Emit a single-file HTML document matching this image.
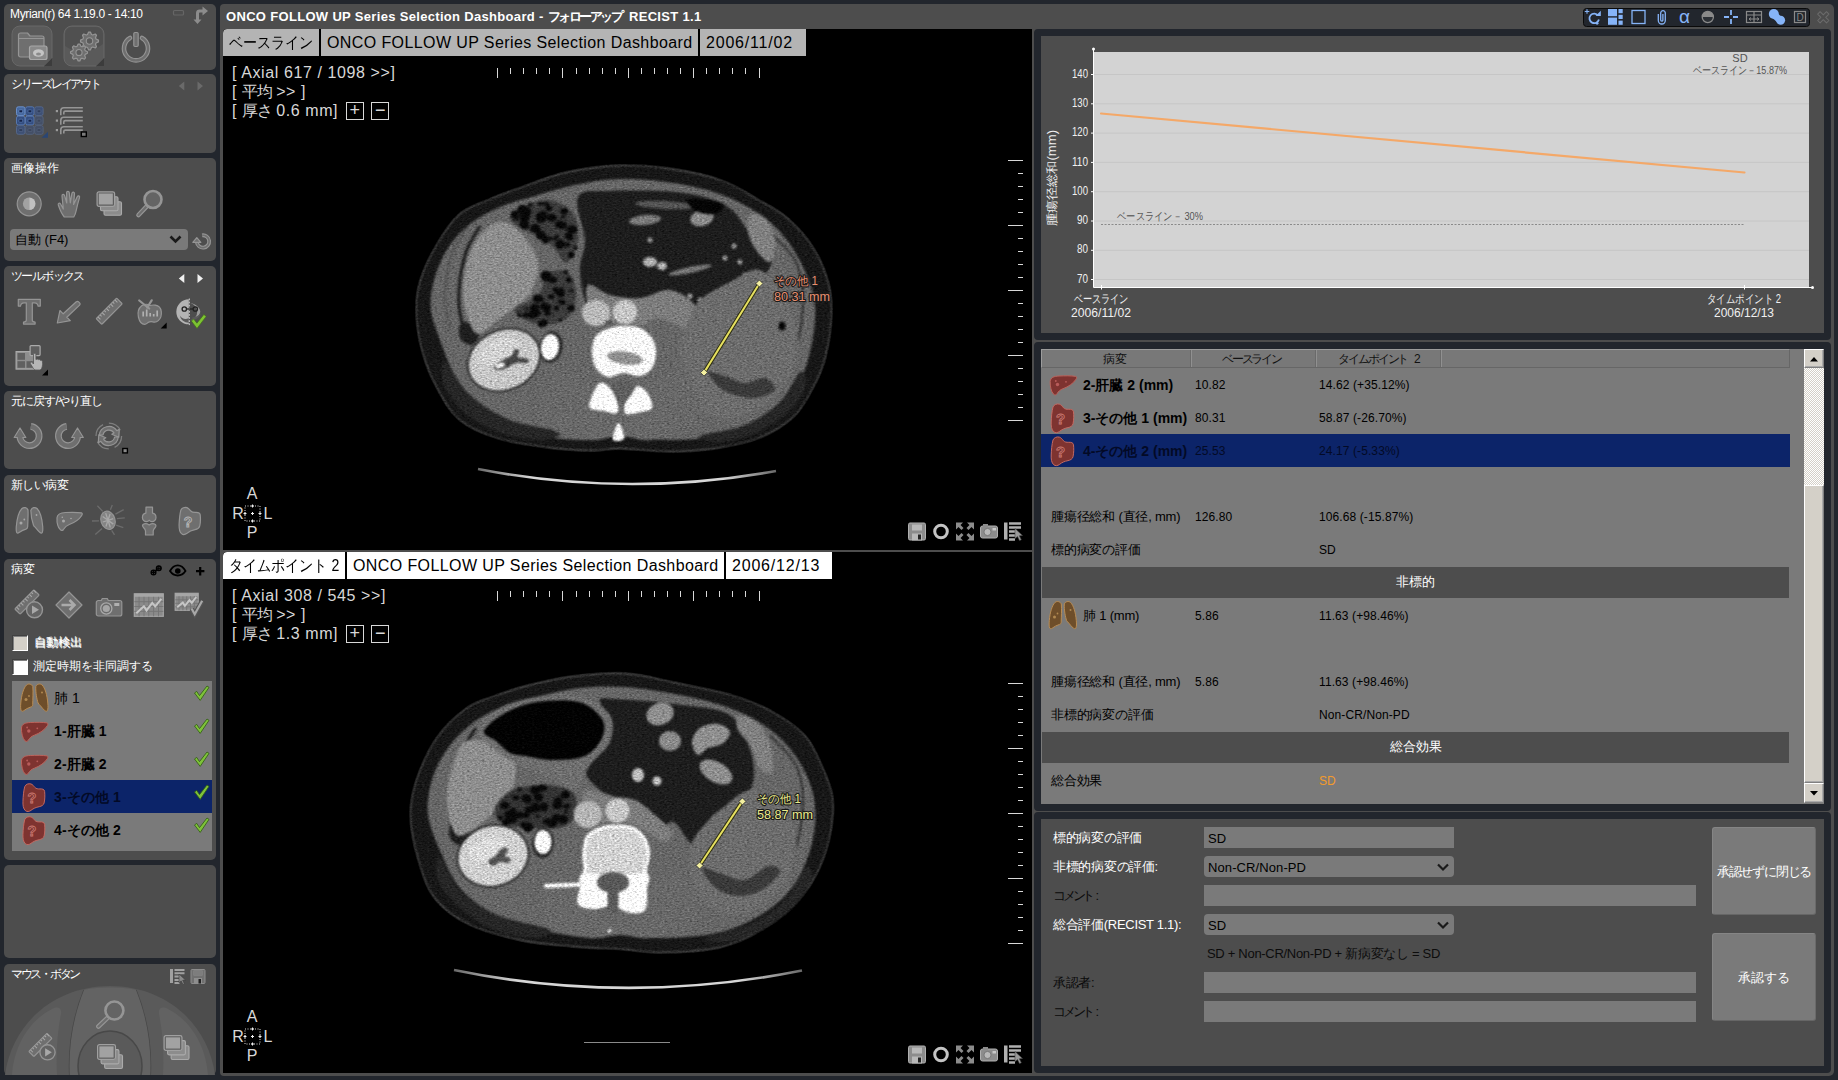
<!DOCTYPE html>
<html lang="ja">
<head>
<meta charset="utf-8">
<title>Myrian - ONCO FOLLOW UP</title>
<style>
*{box-sizing:border-box;margin:0;padding:0}
html,body{width:1838px;height:1080px;overflow:hidden;background:#22262d;font-family:"Liberation Sans",sans-serif;font-size:12px;line-height:14px;color:#fff}
.abs{position:absolute}
.p{position:absolute;left:4px;width:212px;background:#4d4d4d;border-radius:5px}
.pt{position:absolute;left:7px;top:3px;font-size:12px;line-height:14px;color:#fff;white-space:nowrap}
.t{position:absolute;white-space:nowrap;line-height:14px}
.j{letter-spacing:-1px}
svg{position:absolute;overflow:visible}
/* center */
#center{position:absolute;left:220px;top:4px;width:814px;height:1072px;background:#4d4d4d;border-radius:4px 0 0 4px}
.vp{position:absolute;left:3px;width:809px;background:#000;overflow:hidden;border-top-left-radius:4px}
.tab{position:absolute;top:0;height:27px;background:#b4b4b4;color:#000;font-size:16px;line-height:27px;white-space:nowrap;overflow:hidden;padding-left:6px;letter-spacing:0.4px}
.tab.on{background:#fff}
.tab i{font-style:normal;display:inline-block;transform-origin:0 50%;transform:scaleX(0.88);letter-spacing:0}
.bx{display:inline-block;width:18px;height:18px;border:1px solid #d8d8d8;line-height:15px;text-align:center;font-size:18px;vertical-align:0;letter-spacing:0;margin-left:2.5px}
.ov{position:absolute;color:#d8d8d8;font-size:16px;white-space:nowrap;line-height:19px;letter-spacing:0.6px}
.oj{letter-spacing:-1.5px}
/* right */
#right{position:absolute;left:1034px;top:4px;width:800px;height:1072px;background:#4d4d4d;border-radius:0 5px 5px 0}
.rp{position:absolute;left:0;width:797px;background:#4d4d4d;border:7px solid #22262d;border-radius:4px}
.th{color:#111;font-size:12px}
.td{color:#000;font-size:12px;letter-spacing:.1px}
.td .k{font-size:13px;letter-spacing:-.2px}
.td b{font-size:14px;letter-spacing:0}
.sbb{width:20px;background:#d4d0c8;border:1px solid #fff;border-right-color:#808080;border-bottom-color:#808080;box-shadow:inset -1px -1px 0 #aaa}
.fl{font-size:13px;color:#fff;letter-spacing:-.3px}
.fb{background:#7a7a7a;color:#000;font-size:13px;letter-spacing:.1px;line-height:23px;padding-left:4px;overflow:hidden;white-space:nowrap}
</style>
</head>
<body>
<!-- ============ SIDEBAR ============ -->
<div id="side">
<div class="p" style="top:4px;height:66px"></div>
<div class="p" style="top:74px;height:79px"></div>
<div class="p" style="top:158px;height:102.5px"></div>
<div class="p" style="top:266px;height:120px"></div>
<div class="p" style="top:391px;height:78px"></div>
<div class="p" style="top:475px;height:78px"></div>
<div class="p" style="top:559px;height:301px"></div>
<div class="p" style="top:865px;height:92.5px"></div>
<div class="p" style="top:963.5px;height:111.5px"></div>
<div class="pt" style="left:10px;top:6.5px;letter-spacing:-0.35px;font-size:12px">Myrian(r) 64 1.19.0 - 14:10</div>
<div class="pt" style="left:11px;top:76.5px;letter-spacing:-2.100px;">シリーズレイアウト</div>
<div class="pt" style="left:11px;top:160.5px;letter-spacing:0;">画像操作</div>
<div class="pt" style="left:11px;top:268.5px;letter-spacing:-1.600px;">ツールボックス</div>
<div class="pt" style="left:11px;top:393.5px;letter-spacing:-.9px;">元に戻す/やり直し</div>
<div class="pt" style="left:11px;top:478px;letter-spacing:-.6px;">新しい病変</div>
<div class="pt" style="left:11px;top:562px;letter-spacing:0;">病変</div>
<div class="pt" style="left:11px;top:966.5px;letter-spacing:-2.300px;">マウス・ボタン</div>
<div class="abs" style="left:10px;top:229px;width:178px;height:21px;background:#7a7a7a;border-radius:4px;color:#000;font-size:13px;line-height:21px;padding-left:5px;white-space:nowrap">自動 (F4)</div>
<div class="abs" style="left:12px;top:635px;width:16px;height:16px;background:#d4d0c8;border:1px solid #404040;border-right-color:#fff;border-bottom-color:#fff;box-shadow:inset 1px 1px 0 #808080"></div>
<div class="abs" style="left:12px;top:659px;width:16px;height:16px;background:#fff;border:1px solid #404040;border-right-color:#fff;border-bottom-color:#fff;box-shadow:inset 1px 1px 0 #808080"></div>
<div class="pt" style="left:34px;top:635px;font-size:12px;text-shadow:1px 1px 0 #fff;letter-spacing:0">自動検出</div>
<div class="pt" style="left:33px;top:659px;font-size:12px;letter-spacing:0">測定時期を非同調する</div>
<div class="abs" style="left:12px;top:681px;width:200px;height:170px;background:#7a7a7a"></div>
<div class="abs" style="left:12px;top:780px;width:200px;height:33px;background:#0c2469"></div>
<div class="t" style="left:54px;top:691px;color:#000;font-size:14px;letter-spacing:.1px;">肺 1</div>
<div class="t" style="left:54px;top:724px;color:#000;font-size:14px;letter-spacing:.1px;font-weight:bold">1-肝臓 1</div>
<div class="t" style="left:54px;top:757px;color:#000;font-size:14px;letter-spacing:.1px;font-weight:bold">2-肝臓 2</div>
<div class="t" style="left:54px;top:790px;color:#030a26;font-size:14px;letter-spacing:.1px;font-weight:bold">3-その他 1</div>
<div class="t" style="left:54px;top:823px;color:#000;font-size:14px;letter-spacing:.1px;font-weight:bold">4-その他 2</div>
<svg width="220" height="1080" viewBox="0 0 220 1080" style="left:0;top:0"><rect x="173.500" y="10.500" width="10" height="4.500" rx="1" fill="none" stroke="#666" stroke-width="1.200"/>
<path d="M196 19.500l0-6.500c0-2.500 1.500-3.500 3.500-3.500h3v-3l5.500 4.500-5.500 4.500v-3h-2.500c-.7 0-1 .3-1 1v6h2.500l-4 4.500-4-4.500z" fill="#8c8c8c"/>
<g transform="translate(12,26)"><path d="M8 0h24a8 8 0 0 1 8 8v24l-8 8H8a8 8 0 0 1-8-8V8a8 8 0 0 1 8-8z" fill="#5a5a5a" stroke="#686868"/><path d="M32 40l8-8v8z" fill="#3c3c3c"/>
<path d="M6.500 9a2 2 0 0 1 2-2h7l2.500 3h12a2 2 0 0 1 2 2v17a2 2 0 0 1-2 2h-21.500a2 2 0 0 1-2-2z" fill="#6f6f6f" stroke="#959595" stroke-width="1.2" stroke-linejoin="round" stroke-linecap="round"/><path d="M7 12.500h25" stroke="#959595" fill="none"/>
<rect x="17.500" y="20" width="17.500" height="13.500" rx="2" fill="#8a8a8a" stroke="#a8a8a8" stroke-width="1.200"/><ellipse cx="26.500" cy="27" rx="5.500" ry="3.800" fill="#c4c4c4"/><ellipse cx="26.500" cy="28" rx="2.500" ry="1.500" fill="#8a8a8a"/></g>
<g transform="translate(64,26)"><path d="M8 0h24a8 8 0 0 1 8 8v24l-8 8H8a8 8 0 0 1-8-8V8a8 8 0 0 1 8-8z" fill="#5a5a5a" stroke="#686868"/><path d="M32 40l8-8v8z" fill="#3c3c3c"/><path d="M1 20c8 6 25 8 38-2V8a7 7 0 0 0-7-7H8a7 7 0 0 0-7 7z" fill="#4a4a4a" opacity=".6"/>
<path d="M34.46 14.12L34.46 15.88L32.05 16.99L31.53 18.22L32.46 20.71L31.21 21.96L28.72 21.03L27.49 21.55L26.38 23.96L24.62 23.96L23.51 21.55L22.28 21.03L19.79 21.96L18.54 20.71L19.47 18.22L18.95 16.99L16.54 15.88L16.54 14.12L18.95 13.01L19.47 11.78L18.54 9.29L19.79 8.04L22.28 8.97L23.51 8.45L24.62 6.04L26.38 6.04L27.49 8.45L28.72 8.97L31.21 8.04L32.46 9.29L31.53 11.78L32.05 13.01Z" fill="#6f6f6f" stroke="#959595" stroke-width="1.2" stroke-linejoin="round" stroke-linecap="round"/><circle cx="25.5" cy="15" r="3.24" fill="#5a5a5a" stroke="#959595" stroke-width="1.100"/><path d="M23.46 25.67L23.46 27.33L21.18 28.38L20.70 29.55L21.57 31.89L20.39 33.07L18.05 32.20L16.88 32.68L15.83 34.96L14.17 34.96L13.12 32.68L11.95 32.20L9.61 33.07L8.43 31.89L9.30 29.55L8.82 28.38L6.54 27.33L6.54 25.67L8.82 24.62L9.30 23.45L8.43 21.11L9.61 19.93L11.95 20.80L13.12 20.32L14.17 18.04L15.83 18.04L16.88 20.32L18.05 20.80L20.39 19.93L21.57 21.11L20.70 23.45L21.18 24.62Z" fill="#6f6f6f" stroke="#959595" stroke-width="1.2" stroke-linejoin="round" stroke-linecap="round"/><circle cx="15" cy="26.5" r="3.06" fill="#5a5a5a" stroke="#959595" stroke-width="1.100"/></g>
<path d="M130 38.0a12 12 0 1 0 12 0" fill="none" stroke="#959595" stroke-width="4.600" stroke-linecap="round"/><path d="M130 38.0a12 12 0 1 0 12 0" fill="none" stroke="#6f6f6f" stroke-width="2.400" stroke-linecap="round"/><rect x="133.8" y="32.5" width="4.400" height="14" rx="1.200" fill="#6f6f6f" stroke="#959595" stroke-width="1.2" stroke-linejoin="round" stroke-linecap="round"/>
<path d="M184.300 81.500v9l-5.500-4.500zM197.500 81.500v9l5.500-4.500z" fill="#6a6a6a"/>
<rect x="16.5" y="106.8" width="8.400" height="8.700" rx="1.800" fill="#46689e" stroke="#6e94d0" stroke-width=".9"/><rect x="18.9" y="109.8" width="3.800" height="3" rx=".8" fill="#16244a" stroke="#6e94d0" stroke-width=".7"/><rect x="25.6" y="106.8" width="8.400" height="8.700" rx="1.800" fill="#344e80" stroke="#5a7cb4" stroke-width=".9"/><rect x="28.0" y="109.8" width="3.800" height="3" rx=".8" fill="#18264c" stroke="#5a7cb4" stroke-width=".7"/><rect x="34.7" y="106.8" width="8.400" height="8.700" rx="1.800" fill="#3e5074" stroke="#56698c" stroke-width=".9"/><rect x="37.1" y="109.8" width="3.800" height="3" rx=".8" fill="#303e5c" stroke="#56698c" stroke-width=".7"/><rect x="16.5" y="116.2" width="8.400" height="8.700" rx="1.800" fill="#344e80" stroke="#5a7cb4" stroke-width=".9"/><rect x="18.9" y="119.2" width="3.800" height="3" rx=".8" fill="#18264c" stroke="#5a7cb4" stroke-width=".7"/><rect x="25.6" y="116.2" width="8.400" height="8.700" rx="1.800" fill="#344e80" stroke="#5a7cb4" stroke-width=".9"/><rect x="28.0" y="119.2" width="3.800" height="3" rx=".8" fill="#18264c" stroke="#5a7cb4" stroke-width=".7"/><rect x="34.7" y="116.2" width="8.400" height="8.700" rx="1.800" fill="#444f66" stroke="#55637e" stroke-width=".9"/><rect x="37.1" y="119.2" width="3.800" height="3" rx=".8" fill="#3c465c" stroke="#55637e" stroke-width=".7"/><rect x="16.5" y="125.6" width="8.400" height="8.700" rx="1.800" fill="#3e5074" stroke="#56698c" stroke-width=".9"/><rect x="18.9" y="128.6" width="3.800" height="3" rx=".8" fill="#303e5c" stroke="#56698c" stroke-width=".7"/><rect x="25.6" y="125.6" width="8.400" height="8.700" rx="1.800" fill="#444f66" stroke="#55637e" stroke-width=".9"/><rect x="28.0" y="128.6" width="3.800" height="3" rx=".8" fill="#3c465c" stroke="#55637e" stroke-width=".7"/><rect x="34.7" y="125.6" width="8.400" height="8.700" rx="1.800" fill="#444f66" stroke="#55637e" stroke-width=".9"/><rect x="37.1" y="128.6" width="3.800" height="3" rx=".8" fill="#3c465c" stroke="#55637e" stroke-width=".7"/><path d="M48.0 131.8v6h-6.500z" fill="#2a4674"/>
<rect x="55.8" y="110.0" width="2.200" height="2.200" fill="#9a9a9a"/><path d="M82.8 107.7H63.8a3 3 0 0 0-3 3v4.500M82.8 111.1H65.3a1.500 1.500 0 0 0-1.500 1.500v2" fill="none" stroke="#959595" stroke-width="1.600"/><rect x="55.8" y="119.5" width="2.200" height="2.200" fill="#9a9a9a"/><path d="M82.8 117.2H63.8a3 3 0 0 0-3 3v4.500M82.8 120.6H65.3a1.500 1.500 0 0 0-1.500 1.500v2" fill="none" stroke="#959595" stroke-width="1.600"/><rect x="55.8" y="129.0" width="2.200" height="2.200" fill="#9a9a9a"/><path d="M82.8 126.7H63.8a3 3 0 0 0-3 3v4.500M82.8 130.1H65.3a1.500 1.500 0 0 0-1.500 1.500v2" fill="none" stroke="#959595" stroke-width="1.600"/><rect x="81.3" y="132.0" width="5" height="4.500" fill="#7a7a7a" stroke="#000" stroke-width="1.400"/>
<circle cx="29.2" cy="203.8" r="12" fill="#6f6f6f" stroke="#959595" stroke-width="1.2" stroke-linejoin="round" stroke-linecap="round" stroke-width="1.600"/><path d="M29.2 197.5a6.300 6.300 0 0 0 0 12.600z" fill="#a2a2a2"/><path d="M29.2 197.5a6.300 6.300 0 0 1 0 12.600z" fill="#c0c0c0"/>
<g transform="translate(57.8,190.5)"><path d="M6.500 26.500c-2.500-3-4.500-7.500-6-12-.5-1.800 1.300-2.600 2.300-1l2.700 5L4.200 5.500c-.2-2 2.100-2.300 2.600-.4L9 12.500 8.800 2.300c0-2 2.500-2 2.700 0l1 10 1.600-9.500c.4-1.900 2.700-1.500 2.600.4l-.9 10.800 3.600-7.800c.9-1.700 2.900-.8 2.300 1-1.500 5-2.400 8.500-3.200 12.500-.5 2.500-1.200 5-2.500 6.800z" fill="#6f6f6f" stroke="#959595" stroke-width="1.2" stroke-linejoin="round" stroke-linecap="round"/></g>
<g transform="translate(96.5,191.2) scale(1)"><rect x="7.500" y="10.500" width="17.500" height="13.500" rx="1.500" fill="#8c8c8c" stroke="#aaa" stroke-width="1.100"/><rect x="4" y="5.500" width="17.500" height="14" rx="1.500" fill="#8c8c8c" stroke="#aaa" stroke-width="1.100"/><rect x=".6" y=".6" width="17.500" height="14.500" rx="1.800" fill="#5e5e5e" stroke="#a0a0a0" stroke-width="1.200"/><rect x="2.300" y="2.300" width="14" height="11" fill="#a2a2a2"/></g>
<path d="M147.7 205.3L138.5 215.0" stroke="#959595" stroke-width="4.600" stroke-linecap="round"/><path d="M147.7 205.3L138.5 215.0" stroke="#6f6f6f" stroke-width="2.200" stroke-linecap="round"/><circle cx="153" cy="199.5" r="8.5" fill="#646464" stroke="#959595" stroke-width="2.600"/>
<path d="M170.500 236.500l5 5 5-5" fill="none" stroke="#1a1a1a" stroke-width="2.600"/>
<g transform="translate(203,241.5)"><path d="M-0.9 -6.2A6.2 6.2 0 1 1 -6.2 0.6" fill="none" stroke="#959595" stroke-width="3.8" /><path d="M-0.9 -6.2A6.2 6.2 0 1 1 -6.2 0.6" fill="none" stroke="#6f6f6f" stroke-width="1.5999999999999996"/><path d="M-10.2 0.9h8.0l-4.0 -4.8z" fill="#6f6f6f" stroke="#959595" stroke-width="1.2" stroke-linejoin="round" stroke-linecap="round"/></g>
<path d="M184.300 274v9l-5.500-4.500zM197.500 274v9l5.500-4.500z" fill="#f0f0f0"/>
<g transform="translate(17.5,298.5)"><path d="M.8 .8h22v6.800h-2.200c-.3-2.200-1.300-3.300-3.500-3.300h-2.300v17.500c0 1.200.8 1.700 2.800 1.800v2H6v-2c2-.1 2.800-.6 2.800-1.800V4.300H6.500c-2.200 0-3.200 1.100-3.500 3.300H.8z" fill="#6f6f6f" stroke="#959595" stroke-width="1.2" stroke-linejoin="round" stroke-linecap="round"/></g>
<g transform="translate(56.5,301)"><path d="M.8 22l2.600-12.500 3.300 3.300L19.800 .8a1.600 1.600 0 0 1 2.300 0l1 1a1.600 1.600 0 0 1 0 2.300L10.300 16.300l3.500 3.300z" fill="#6f6f6f" stroke="#959595" stroke-width="1.2" stroke-linejoin="round" stroke-linecap="round"/></g>
<g transform="translate(109.2,311.2) scale(1) rotate(-45)"><rect x="-14.5" y="-4.0" width="29" height="8" rx=".8" fill="#6f6f6f" stroke="#959595" stroke-width="1.2" stroke-linejoin="round" stroke-linecap="round"/><path d="M-12.0 -4.0v3.6M-9.0 -4.0v2.2M-6.0 -4.0v3.6M-3.0 -4.0v2.2M0.0 -4.0v3.6M3.0 -4.0v2.2M6.0 -4.0v3.6M9.0 -4.0v2.2M12.0 -4.0v3.6" stroke="#a8a8a8" stroke-width="1" fill="none"/></g>
<g transform="translate(137.2,299.5)"><path d="M12.500 6c-2-1.600-5.500-1.600-8 .3C1.500 8.700 0.200 13 1.200 17.500c.9 4 3.300 7.300 6.300 7.300 1.500 0 2.200-.9 3.300-1.700 1.500-1.100 3-1.300 4.800-.8 1.800.5 3.800.3 5.500-1.200 2.300-2 3.400-5.500 3-9-.4-3.600-2.700-6-6-6.500-2-.3-4 0-5.600.4z" fill="#6f6f6f" stroke="#959595" stroke-width="1.2" stroke-linejoin="round" stroke-linecap="round"/><path d="M2 1l10 8M14.500 0.800L10 8" stroke="#959595" stroke-width="2.200" stroke-linecap="round"/><path d="M6 17v-5M9.500 17v-7M13 17v-3.500M16.500 17v-2.500M20 17v-6" stroke="#b0b0b0" stroke-width="1.700"/></g><path d="M166.7 322.5v6h-6z" fill="#000"/>
<g transform="translate(175.8,298.5)"><path d="M13 .8A12.500 12.500 0 0 0 13 25.800z" fill="#b4b4b4"/><path d="M14.500 4.500a9 9 0 0 1 0 17.500c5-1 9-4 10-8.500 0-4-4-8-10-9z" fill="#a8a8a8" opacity=".85"/><path d="M4 17c2 3.500 6 4.500 9 2.500v4.800C8.500 24 5 21.500 4 17zM25 14.500c-.5 4-3.500 6.500-8.500 7l0-2.500c4-.3 6.500-2 8.500-4.500z" fill="#5a5a5a"/><path d="M13.500 0v27" stroke="#d0d0d0" stroke-width="1" stroke-dasharray="1.800 1.300"/><circle cx="8.500" cy="10.500" r="2.200" fill="none" stroke="#222" stroke-width="1.300"/><circle cx="19.500" cy="10.500" r="2.200" fill="none" stroke="#222" stroke-width="1.300"/><path d="M10.700 10.500h6.600" stroke="#222" stroke-width="1.300"/></g><path d="M191.3 321.0l2.400-2 3.200 4.200 7-8.700 2.300 1.900-9.200 12z" fill="#7dc332" stroke="#3c6a14" stroke-width=".6"/>
<g transform="translate(15.5,345)"><rect x=".6" y="6.600" width="19" height="17.500" fill="#8e8e8e" stroke="#aaa" stroke-width="1.200"/><rect x="2" y="8" width="7.500" height="6.800" fill="#606060"/><rect x="2" y="16.200" width="7.500" height="6.600" fill="#606060"/><rect x="11" y="16.200" width="7.500" height="6.600" fill="#606060"/><rect x="14.600" y=".6" width="10" height="10" rx="1" fill="#5e5e5e" stroke="#aaa" stroke-width="1.200"/><path d="M18 9.500c0-1.600 2.400-1.600 2.400 0v5l1.200-.4c.8-.2 1.300.2 1.500.7.900-.5 1.700-.1 1.900.6 1-.3 1.800.2 1.900 1.200.4 2 .2 4.200-.6 6.300-.4 1-1 1.900-2.300 2.100h-3.800c-1.300-.2-2-1-2.700-2.100l-2.600-4.200c-.7-1.300.8-2.300 1.800-1.200l1.300 1.500z" fill="#b6b6b6" stroke="#555" stroke-width=".8" stroke-linejoin="round"/></g><path d="M48.0 369.5v6h-6z" fill="#000"/>
<g transform="translate(29.5,436)"><path d="M1.34 -9.51A9.6 9.6 0 1 1 -9.59 0.34" fill="none" stroke="#959595" stroke-width="6.800"/><path d="M-15.300 1.500h11.600l-5.800-9.500z" fill="#6f6f6f" stroke="#959595" stroke-width="1.2" stroke-linejoin="round" stroke-linecap="round"/><path d="M1.34 -9.51A9.6 9.6 0 1 1 -9.59 0.34" fill="none" stroke="#6f6f6f" stroke-width="4.400"/><path d="M-13.500 .6h8l-4-6.800z" fill="#6f6f6f"/></g>
<g transform="translate(68,436) scale(-1,1)"><path d="M1.34 -9.51A9.6 9.6 0 1 1 -9.59 0.34" fill="none" stroke="#959595" stroke-width="6.800"/><path d="M-15.300 1.500h11.600l-5.800-9.500z" fill="#6f6f6f" stroke="#959595" stroke-width="1.2" stroke-linejoin="round" stroke-linecap="round"/><path d="M1.34 -9.51A9.6 9.6 0 1 1 -9.59 0.34" fill="none" stroke="#6f6f6f" stroke-width="4.400"/><path d="M-13.500 .6h8l-4-6.800z" fill="#6f6f6f"/></g>
<g transform="translate(108.8,436)"><circle r="12.800" fill="none" stroke="#7e7e7e" stroke-width="1.300" stroke-dasharray="14 6"/><path d="M-9.500 -1A9.600 9.600 0 0 1 8 -5.300l2.500-1.500-.5 8-7-3 2.200-1.300A6 6 0 0 0 -5.800 -1z" fill="#6f6f6f" stroke="#959595" stroke-width="1.2" stroke-linejoin="round" stroke-linecap="round"/><path d="M9.500 1A9.600 9.600 0 0 1 -8 5.300l-2.500 1.500.5-8 7 3-2.200 1.300A6 6 0 0 0 5.800 1z" fill="#6f6f6f" stroke="#959595" stroke-width="1.2" stroke-linejoin="round" stroke-linecap="round"/></g><rect x="122.8" y="448.5" width="4.600" height="4.400" fill="#8a8a8a" stroke="#000" stroke-width="1.400"/>
<g transform="translate(15.5,506.5)" fill="#6f6f6f" stroke="#959595" stroke-width="1.2" stroke-linejoin="round" stroke-linecap="round"><path d="M12.500 3.500C11.500 1 8.500.3 6.500 2 3.500 5 1.500 12 .8 20c-.2 3-.3 5 .4 6 .5.800 1.500.7 2.300.1 2-1.400 4.300-2.800 7-3.500 1.200-.4 1.700-1 1.700-2.500.1-5 .6-11 .3-16.600z"/><path d="M15.500 3.500C16.500 1 19.500.3 21.500 2c3 3 5 10 5.700 18 .2 3 .3 5-.4 6-.5.800-1.500.7-2.300.1-1.800-1.400-3.100-3.300-4.300-4.800-.8-1-1.700-1.400-2.200-2.600-1.200-3.500-2.800-9.700-2.600-15.200z"/><circle cx="5.500" cy="16.500" r="1.500" fill="#a8a8a8" stroke="none"/><circle cx="8.800" cy="13" r=".9" fill="#a8a8a8" stroke="none"/><circle cx="21" cy="8.500" r=".9" fill="#a8a8a8" stroke="none"/></g>
<g transform="translate(56,511.5)"><path d="M1 6.300C1.300 2.500 4.800 1.200 9.500 1c5.800-.2 11.500-.4 16 .4 1.200.4.800 1.700.2 2.600-2.400 3.800-7.200 7.100-12.400 9-2.700 1-4.300 2.400-5.700 4.800-.8 1.200-2.100 1.600-3.100.6C2 16.200.8 10.500 1 6.300z" fill="#6f6f6f" stroke="#959595" stroke-width="1.2" stroke-linejoin="round" stroke-linecap="round"/><circle cx="7.500" cy="9.500" r="1.500" fill="#a8a8a8"/><circle cx="6.300" cy="5.800" r=".8" fill="#a8a8a8"/><circle cx="15" cy="7" r=".8" fill="#a8a8a8"/></g>
<path d="M102.7 511.4L97.4 505.7M110.4 509.7L112.3 504.9M115.4 514.1L123.7 509.6M116.9 518.7L124.8 517.8M116.1 525.1L123.3 527.7M111.7 530.3L114.5 534.9M102.0 528.5L95.3 534.5M99.0 520.8L92.0 521.0" stroke="#6c6c6c" stroke-width="1.300"/><ellipse cx="108" cy="520.3" rx="7" ry="9.300" transform="rotate(-18 108 520.3)" fill="#848484" stroke="#959595" stroke-width="1.200"/><path d="M108 520.3L113.5 520.3M108 520.3L111.9 525.6M108 520.3L108.0 527.8M108 520.3L104.1 525.6M108 520.3L102.5 520.3M108 520.3L104.1 515.0M108 520.3L108.0 512.8M108 520.3L111.9 515.0" stroke="#a8a8a8" stroke-width="1.300" transform="rotate(-18 108 520.3)"/>
<g transform="translate(141.5,506.5)"><path d="M4.500 .6h6.500v6c2 .3 3.500 2 3.500 4.300 0 2.600-2 4.200-4 4.200-1.200 0-2.300-.6-2.800-1.400-.5.800-1.600 1.400-2.800 1.400-2 0-4-1.600-4-4.200 0-2.300 1.500-4 3.500-4.300z" fill="#6f6f6f" stroke="#959595" stroke-width="1.2" stroke-linejoin="round" stroke-linecap="round"/><path d="M1.500 18c2-1.400 4-1 6.200.4 2.200-1.400 4.200-1.800 6.200-.4.800.8.600 2.200-.2 3-1 1-2 2-2 3.500V28.500H4v-4c0-1.500-1-2.500-2-3.500-.8-.8-1.200-2.200-.5-3z" fill="#6f6f6f" stroke="#959595" stroke-width="1.2" stroke-linejoin="round" stroke-linecap="round"/></g>
<g transform="translate(178,506.5)"><path d="M2.800 3.800C3.800 1.400 6.600.4 9 1.100c1.700.6 2.600 2.100 3.800 3.400 1.100 1.200 2.800 1.500 4.900 1.400 2.200-.1 4.200.2 4.500 2.400.4 3.600.4 7.500-.5 11.300-.6 2.100-2.400 3.100-4.700 3.600-3.300.7-5.700 1.700-8 3.600-1.700 1.300-4 1.700-5.500.3C1.400 25.300 1 21.700 1.100 18c.2-4.700.6-10 1.700-14.200z" fill="#6f6f6f" stroke="#959595" stroke-width="1.2" stroke-linejoin="round" stroke-linecap="round"/><text x="10" y="20" font-family="Liberation Sans, sans-serif" font-weight="bold" font-size="14" fill="#6f6f6f" stroke="#b4b4b4" stroke-width=".9" text-anchor="middle">?</text></g>
<g fill="none" stroke="#000" stroke-width="1.500"><circle cx="153.500" cy="572.500" r="2.300"/><circle cx="158.800" cy="568.300" r="2.300"/><path d="M155 571.300l2.300-1.800" stroke-width="1.800"/></g><path d="M151 572.500h5M153.500 570v5M156.300 568.300h5M158.800 565.800v5" stroke="#000" stroke-width="1"/>
<path d="M170 571c4-7.500 11.500-7.500 15.500 0-4 6-11.500 6-15.500 0z" fill="none" stroke="#000" stroke-width="1.800"/><circle cx="177.800" cy="571" r="2.800" fill="#000"/>
<path d="M196 571.200h8.400M200.200 567v8.400" stroke="#000" stroke-width="2.200"/>
<g transform="translate(15,590.5) scale(1)"><g transform="translate(12,11.5) scale(1) rotate(-45)"><rect x="-13.5" y="-3.75" width="27" height="7.5" rx=".8" fill="#6f6f6f" stroke="#959595" stroke-width="1.2" stroke-linejoin="round" stroke-linecap="round"/><path d="M-11.0 -3.75v3.6M-8.0 -3.75v2.2M-5.0 -3.75v3.6M-2.0 -3.75v2.2M1.0 -3.75v3.6M4.0 -3.75v2.2M7.0 -3.75v3.6M10.0 -3.75v2.2M13.0 -3.75v3.6" stroke="#a8a8a8" stroke-width="1" fill="none"/></g><circle cx="19.500" cy="19.300" r="8" fill="#646464" stroke="#959595" stroke-width="1.400"/><path d="M17 15l7 4.300-7 4.300z" fill="#a8a8a8"/></g>
<path d="M69 592l13 13-13 13-13-13z" fill="#6f6f6f" stroke="#959595" stroke-width="1.2" stroke-linejoin="round" stroke-linecap="round" stroke-width="1.500"/><path d="M61.5 605h11M69.5 600l5 5-5 5" fill="none" stroke="#aaa" stroke-width="2.600"/>
<g transform="translate(95.8,597)"><path d="M2.500 3.500h3l1-2h5l1 2h11.500a2 2 0 0 1 2 2v11.500a2 2 0 0 1-2 2H2.500a2 2 0 0 1-2-2V5.500a2 2 0 0 1 2-2z" fill="#6f6f6f" stroke="#959595" stroke-width="1.2" stroke-linejoin="round" stroke-linecap="round"/><circle cx="10.500" cy="11.500" r="5.600" fill="#6a6a6a" stroke="#aaa" stroke-width="1.300"/><circle cx="10.500" cy="11.500" r="3.600" fill="#a6a6a6"/><rect x="18.500" y="6" width="5" height="3" fill="#b0b0b0"/></g>
<rect x="134.3" y="593.8" width="29" height="22.5" fill="#8a8a8a" stroke="#a6a6a6" stroke-width="1.200"/><rect x="134.3" y="593.8" width="29" height="3" fill="#a6a6a6"/><path d="M139.1 596.8V616.3M144.0 596.8V616.3M148.8 596.8V616.3M153.6 596.8V616.3M158.5 596.8V616.3M134.3 601.7H163.3M134.3 606.5H163.3M134.3 611.4H163.3" stroke="#747474" stroke-width=".9"/><path d="M136.3 613.3L143.9 606.2L146.5 610.4L152.3 602.8L155.2 606.4L161.3 598.8" fill="none" stroke="#c6c6c6" stroke-width="2"/>
<rect x="175.2" y="593.3" width="23" height="17" fill="#8a8a8a" stroke="#a6a6a6" stroke-width="1.200"/><rect x="175.2" y="593.3" width="23" height="3" fill="#a6a6a6"/><path d="M179.0 596.3V610.3M182.9 596.3V610.3M186.7 596.3V610.3M190.5 596.3V610.3M194.4 596.3V610.3M175.2 599.8H198.2M175.2 603.3H198.2M175.2 606.8H198.2" stroke="#747474" stroke-width=".9"/><path d="M177.2 607.3L182.8 602.6L184.9 605.9L189.5 600.1L191.8 602.8L196.2 597.0" fill="none" stroke="#c6c6c6" stroke-width="2"/><path d="M191.7 608.8l3 5.500 7.500-13.500" fill="none" stroke="#555" stroke-width="4.600"/><path d="M191.7 608.8l3 5.500 7.500-13.500" fill="none" stroke="#a8a8a8" stroke-width="2.200"/>
<g transform="translate(20,683) scale(1.0)" fill="#6e4e2a" stroke="#b88c54" stroke-width="1" stroke-linejoin="round"><path d="M12.800 3.500C11.800 1 8.500.2 6.500 2 3.500 5 1.500 12 .8 20c-.3 3.500-.3 6 .4 7.500.5 1 1.600.9 2.500.2 2-1.500 4.500-3 7.300-3.800 1.200-.4 1.700-1 1.700-2.500.1-5 .6-12 .1-17.900z"/><path d="M15.800 3.500C16.800 1 20.100.2 22.100 2c3 3 5 10 5.700 18 .3 3.500.3 6-.4 7.500-.5 1-1.600.9-2.500.2-1.800-1.500-3.200-3.500-4.500-5-.8-1-1.800-1.500-2.300-2.700-1.200-3.500-2.600-10.500-2.300-16.500z"/><circle cx="6" cy="16.500" r="1.500" fill="#b08850" stroke="none"/><circle cx="9" cy="13" r=".9" fill="#b08850" stroke="none"/><circle cx="22" cy="9.500" r="1" fill="#b08850" stroke="none"/></g>
<g transform="translate(20.3,721.5) scale(1.0)"><path d="M1.200 6.500C1.500 2.500 5 1.200 10 1c6-.2 12-.4 16.800.4 1.200.4.800 1.800.2 2.800-2.500 4-7.500 7.500-13 9.500-2.800 1-4.500 2.500-6 5-.8 1.300-2.200 1.700-3.300.6C2.200 17 1 11 1.200 6.500z" fill="#7e3330" stroke="#bc645c" stroke-width="1" stroke-linejoin="round"/><circle cx="8.500" cy="9.500" r="1.700" fill="#b85c5a"/><circle cx="6.800" cy="6" r=".9" fill="#b85c5a"/><circle cx="17" cy="6.800" r=".9" fill="#b85c5a"/></g>
<g transform="translate(20.3,754.5) scale(1.0)"><path d="M1.200 6.500C1.500 2.500 5 1.200 10 1c6-.2 12-.4 16.800.4 1.200.4.800 1.800.2 2.800-2.500 4-7.500 7.500-13 9.500-2.800 1-4.500 2.500-6 5-.8 1.300-2.200 1.700-3.300.6C2.200 17 1 11 1.200 6.500z" fill="#7e3330" stroke="#bc645c" stroke-width="1" stroke-linejoin="round"/><circle cx="8.500" cy="9.500" r="1.700" fill="#b85c5a"/><circle cx="6.800" cy="6" r=".9" fill="#b85c5a"/><circle cx="17" cy="6.800" r=".9" fill="#b85c5a"/></g>
<g transform="translate(21.8,782.8) scale(0.97)"><path d="M3 4C4 1.500 7 .4 9.500 1.200c1.800.6 2.800 2.200 4 3.600 1.200 1.300 3 1.600 5.200 1.500 2.300-.1 4.500.2 4.800 2.500.4 3.800.4 8-.5 12-.6 2.200-2.500 3.300-5 3.800-3.500.7-6 1.800-8.500 3.800-1.800 1.400-4.200 1.800-5.800.3C1.500 26.800 1 23 1.200 19c.2-5 .6-10.500 1.800-15z" fill="#7e3330" stroke="#c46a62" stroke-width="1" stroke-linejoin="round"/><text x="10.500" y="21" font-family="Liberation Sans, sans-serif" font-weight="bold" font-size="15" fill="#7e3330" stroke="#cc7c74" stroke-width=".8" text-anchor="middle">?</text></g>
<g transform="translate(21.8,815.8) scale(0.97)"><path d="M3 4C4 1.500 7 .4 9.500 1.200c1.800.6 2.800 2.200 4 3.600 1.200 1.300 3 1.600 5.200 1.500 2.300-.1 4.500.2 4.800 2.500.4 3.800.4 8-.5 12-.6 2.200-2.500 3.300-5 3.800-3.500.7-6 1.800-8.500 3.800-1.800 1.400-4.200 1.800-5.800.3C1.500 26.800 1 23 1.200 19c.2-5 .6-10.500 1.800-15z" fill="#7e3330" stroke="#c46a62" stroke-width="1" stroke-linejoin="round"/><text x="10.500" y="21" font-family="Liberation Sans, sans-serif" font-weight="bold" font-size="15" fill="#7e3330" stroke="#cc7c74" stroke-width=".8" text-anchor="middle">?</text></g>
<path d="M194.5 693l2.200-1.600 2.800 4.200L207.0 686l2 1.400-8.800 13z" fill="#7ec23a" stroke="#2e5a10" stroke-width=".8" stroke-linejoin="round"/>
<path d="M194.5 726l2.200-1.600 2.800 4.200L207.0 719l2 1.400-8.800 13z" fill="#7ec23a" stroke="#2e5a10" stroke-width=".8" stroke-linejoin="round"/>
<path d="M194.5 759l2.200-1.600 2.800 4.200L207.0 752l2 1.400-8.800 13z" fill="#7ec23a" stroke="#2e5a10" stroke-width=".8" stroke-linejoin="round"/>
<path d="M194.5 792l2.200-1.600 2.800 4.200L207.0 785l2 1.400-8.800 13z" fill="#7ec23a" stroke="#2e5a10" stroke-width=".8" stroke-linejoin="round"/>
<path d="M194.5 825l2.200-1.600 2.800 4.200L207.0 818l2 1.400-8.800 13z" fill="#7ec23a" stroke="#2e5a10" stroke-width=".8" stroke-linejoin="round"/>
<g transform="translate(170,969)"><rect x="0" y="0" width="3" height="14" fill="#a0a0a0"/><path d="M4.500 1h10M4.500 4.300h10M4.500 7.600h6M4.500 10.900h5M4.500 14h5" stroke="#a0a0a0" stroke-width="2"/><path d="M9 5l6.500 6-2.800.3 1.700 3.400-1.500.7-1.700-3.500-2.200 1.800z" fill="#8a8a8a" stroke="#3a3a3a" stroke-width=".6"/></g>
<g transform="translate(190.5,969)"><rect x=".5" y=".5" width="14" height="14" rx="1" fill="#707070" stroke="#8c8c8c"/><rect x="3" y="1.500" width="9" height="5" fill="#8e8e8e"/><path d="M3.500 3h8M3.500 5h8" stroke="#666" stroke-width=".8"/><rect x="3.500" y="9" width="8" height="6" fill="#8e8e8e"/><rect x="8" y="10" width="2.500" height="4.500" fill="#222"/></g>
<clipPath id="mclip"><rect x="4" y="980" width="212" height="95" rx="0"/></clipPath>
<g clip-path="url(#mclip)"><path d="M4 1090C4 1030 50 986 110 986s106 44 106 104z" fill="#5a5a5a"/>
<path d="M84 990C72 1020 68 1050 70 1080M136 990c12 30 16 60 14 90" fill="none" stroke="#474747" stroke-width="1.500"/>
<path d="M84 990c9-3.500 43-3.500 52 0 12 30 16 60 14 90H70c-2-30 2-60 14-90z" fill="#636363"/>
<path d="M12 1075c2-30 18-55 40-66 6-3 10-1 9 5-4 20-5 40-4 61zM208 1075c-2-30-18-55-40-66-6-3-10-1-9 5 4 20 5 40 4 61z" fill="#626262"/>
<ellipse cx="110" cy="1066" rx="32" ry="35" fill="#5a5a5a" stroke="#484848" stroke-width="1.500"/></g>
<path d="M108.8 1016.6L98.4 1026.5" stroke="#959595" stroke-width="4.600" stroke-linecap="round"/><path d="M108.8 1016.6L98.4 1026.5" stroke="#6f6f6f" stroke-width="2.200" stroke-linecap="round"/><circle cx="114.4" cy="1010.5" r="9" fill="#646464" stroke="#959595" stroke-width="2.600"/>
<g transform="translate(29,1034) scale(0.95)"><g transform="translate(12,11.5) scale(1) rotate(-45)"><rect x="-13.5" y="-3.75" width="27" height="7.5" rx=".8" fill="#6f6f6f" stroke="#959595" stroke-width="1.2" stroke-linejoin="round" stroke-linecap="round"/><path d="M-11.0 -3.75v3.6M-8.0 -3.75v2.2M-5.0 -3.75v3.6M-2.0 -3.75v2.2M1.0 -3.75v3.6M4.0 -3.75v2.2M7.0 -3.75v3.6M10.0 -3.75v2.2M13.0 -3.75v3.6" stroke="#a8a8a8" stroke-width="1" fill="none"/></g><circle cx="19.500" cy="19.300" r="8" fill="#646464" stroke="#959595" stroke-width="1.400"/><path d="M17 15l7 4.300-7 4.300z" fill="#a8a8a8"/></g>
<g transform="translate(97,1044) scale(1.02)"><rect x="7.500" y="10.500" width="17.500" height="13.500" rx="1.500" fill="#8c8c8c" stroke="#aaa" stroke-width="1.100"/><rect x="4" y="5.500" width="17.500" height="14" rx="1.500" fill="#8c8c8c" stroke="#aaa" stroke-width="1.100"/><rect x=".6" y=".6" width="17.500" height="14.500" rx="1.800" fill="#5e5e5e" stroke="#a0a0a0" stroke-width="1.200"/><rect x="2.300" y="2.300" width="14" height="11" fill="#a2a2a2"/></g>
<g transform="translate(163.5,1035) scale(1.02)"><rect x="7.500" y="10.500" width="17.500" height="13.500" rx="1.500" fill="#8c8c8c" stroke="#aaa" stroke-width="1.100"/><rect x="4" y="5.500" width="17.500" height="14" rx="1.500" fill="#8c8c8c" stroke="#aaa" stroke-width="1.100"/><rect x=".6" y=".6" width="17.500" height="14.500" rx="1.800" fill="#5e5e5e" stroke="#a0a0a0" stroke-width="1.200"/><rect x="2.300" y="2.300" width="14" height="11" fill="#a2a2a2"/></g></svg>
</div>
<!-- ============ CENTER ============ -->
<svg width="0" height="0"><defs>
<filter id="ctf" x="-5%" y="-5%" width="110%" height="110%" color-interpolation-filters="sRGB"><feGaussianBlur stdDeviation="0.9" result="b"/><feTurbulence type="fractalNoise" baseFrequency="0.4 0.7" numOctaves="2" seed="7" result="n"/><feColorMatrix in="n" type="matrix" values="0.34 0.33 0.33 0 0  0.34 0.33 0.33 0 0  0.34 0.33 0.33 0 0  0 0 0 0 1" result="g"/><feComposite in="g" in2="b" operator="in" result="gm"/><feComposite in="b" in2="gm" operator="arithmetic" k1="0.9" k2="0.55" k3="0.2" k4="-0.1"/></filter>
<linearGradient id="arcg" x1="0" x2="1" y1="0" y2="0"><stop offset="0" stop-color="#6a6a6a"/><stop offset=".18" stop-color="#d6d6d6"/><stop offset=".82" stop-color="#d6d6d6"/><stop offset="1" stop-color="#6a6a6a"/></linearGradient></defs></svg>
<div id="center">
<div class="t" style="left:6px;top:6px;font-size:13px;font-weight:bold;color:#fff;letter-spacing:0.32px">ONCO FOLLOW UP Series Selection Dashboard - <span style="letter-spacing:-2.500px">フォローアップ</span>&nbsp; RECIST 1.1</div>
<div class="vp" id="vp1" style="top:25px;height:521px">
<div class="tab" style="left:0px;width:96px;border-top-left-radius:4px"><i>ベースライン</i></div><div class="tab" style="left:98px;width:377px">ONCO FOLLOW UP Series Selection Dashboard</div><div class="tab" style="left:477px;width:106px"><span style="letter-spacing:.8px">2006/11/02</span></div>
<div class="ov" style="left:9px;top:34px">[ Axial 617 / 1098 &gt;&gt;]<br>[ <span class="oj">平均</span> &gt;&gt; ]<br>[ <span class="oj">厚さ</span> 0.6 mm] <span class="bx">+</span> <span class="bx">&minus;</span></div>
<svg width="809" height="521" viewBox="223 29 809 521" style="left:0;top:0">
<path d="M497.5 68v10M510.6 68v5.5M523.6 68v5.5M536.7 68v5.5M549.8 68v5.5M562.9 68v10M576.0 68v5.5M589.0 68v5.5M602.1 68v5.5M615.2 68v5.5M628.2 68v10M641.3 68v5.5M654.4 68v5.5M667.5 68v5.5M680.5 68v5.5M693.6 68v10M706.7 68v5.5M719.8 68v5.5M732.9 68v5.5M745.9 68v5.5M759.0 68v10" stroke="#d8d8d8" stroke-width="1" fill="none" shape-rendering="crispEdges"/>
<path d="M1008.0 160.5h15M1017.5 173.5h5.5M1017.5 186.5h5.5M1017.5 199.5h5.5M1017.5 212.5h5.5M1008.0 225.5h15M1017.5 238.5h5.5M1017.5 251.5h5.5M1017.5 264.5h5.5M1017.5 277.5h5.5M1008.0 290.5h15M1017.5 303.5h5.5M1017.5 316.5h5.5M1017.5 329.5h5.5M1017.5 342.5h5.5M1008.0 355.5h15M1017.5 368.5h5.5M1017.5 381.5h5.5M1017.5 394.5h5.5M1017.5 407.5h5.5M1008.0 420.5h15" stroke="#d8d8d8" stroke-width="1" fill="none" shape-rendering="crispEdges"/>
<g filter="url(#ctf)">
<path d="M620.0 165.0C637.2 164.3 652.0 165.5 669.0 168.0C686.0 170.5 707.2 174.8 722.0 180.0C736.8 185.2 747.0 192.7 758.0 199.0C769.0 205.3 778.7 209.8 788.0 218.0C797.3 226.2 807.2 237.2 814.0 248.0C820.8 258.8 826.0 271.7 829.0 283.0C832.0 294.3 832.5 303.7 832.0 316.0C831.5 328.3 829.0 345.2 826.0 357.0C823.0 368.8 819.3 377.0 814.0 387.0C808.7 397.0 803.3 408.3 794.0 417.0C784.7 425.7 771.3 433.7 758.0 439.0C744.7 444.3 728.8 446.8 714.0 449.0C699.2 451.2 684.7 452.0 669.0 452.0C653.3 452.0 632.8 449.2 620.0 449.0C607.2 448.8 604.0 451.2 592.0 451.0C580.0 450.8 563.7 450.0 548.0 448.0C532.3 446.0 512.8 443.7 498.0 439.0C483.2 434.3 469.3 428.7 459.0 420.0C448.7 411.3 442.2 398.3 436.0 387.0C429.8 375.7 425.3 363.8 422.0 352.0C418.7 340.2 416.5 327.5 416.0 316.0C415.5 304.5 415.7 294.8 419.0 283.0C422.3 271.2 429.3 256.5 436.0 245.0C442.7 233.5 450.2 221.7 459.0 214.0C467.8 206.3 479.2 203.3 489.0 199.0C498.8 194.7 505.2 192.5 518.0 188.0C530.8 183.5 549.0 175.8 566.0 172.0C583.0 168.2 602.8 165.7 620.0 165.0Z" fill="#171717" stroke="#707070" stroke-width="1.3" />
<path d="M620.0 179.0C637.5 178.8 661.7 180.8 680.0 184.0C698.3 187.2 715.0 191.7 730.0 198.0C745.0 204.3 759.2 213.0 770.0 222.0C780.8 231.0 788.0 240.7 795.0 252.0C802.0 263.3 808.7 278.7 812.0 290.0C815.3 301.3 815.7 308.3 815.0 320.0C814.3 331.7 811.8 347.5 808.0 360.0C804.2 372.5 800.0 384.7 792.0 395.0C784.0 405.3 772.8 415.2 760.0 422.0C747.2 428.8 730.0 433.0 715.0 436.0C700.0 439.0 685.8 440.0 670.0 440.0C654.2 440.0 634.2 436.0 620.0 436.0C605.8 436.0 598.3 440.0 585.0 440.0C571.7 440.0 554.2 438.7 540.0 436.0C525.8 433.3 511.7 430.0 500.0 424.0C488.3 418.0 478.0 409.0 470.0 400.0C462.0 391.0 457.0 380.0 452.0 370.0C447.0 360.0 443.5 350.0 440.0 340.0C436.5 330.0 432.0 320.0 431.0 310.0C430.0 300.0 431.2 290.3 434.0 280.0C436.8 269.7 442.0 257.3 448.0 248.0C454.0 238.7 461.3 230.8 470.0 224.0C478.7 217.2 489.2 211.7 500.0 207.0C510.8 202.3 522.5 199.7 535.0 196.0C547.5 192.3 560.8 187.8 575.0 185.0C589.2 182.2 602.5 179.2 620.0 179.0Z" fill="#666" />
<path d="M480.0 226.0C477.7 230.3 469.5 241.3 466.0 252.0C462.5 262.7 459.7 278.3 459.0 290.0C458.3 301.7 459.5 313.7 462.0 322.0C464.5 330.3 472.0 337.0 474.0 340.0" fill="none" stroke="#1c1c1c" stroke-width="3"/>
<path d="M770.0 232.0C774.3 237.0 790.5 250.7 796.0 262.0C801.5 273.3 802.7 287.0 803.0 300.0C803.3 313.0 801.0 328.0 798.0 340.0C795.0 352.0 787.2 366.7 785.0 372.0" fill="none" stroke="#3a3a3a" stroke-width="2.5"/>
<path d="M468.0 226.0C465.2 231.0 454.8 244.3 451.0 256.0C447.2 267.7 445.2 283.7 445.0 296.0C444.8 308.3 449.2 324.3 450.0 330.0" fill="none" stroke="#4a4a4a" stroke-width="1.500"/>
<path d="M445.0 362.0C449.3 363.7 459.2 385.3 470.0 395.0C480.8 404.7 495.0 413.8 510.0 420.0C525.0 426.2 555.0 428.7 560.0 432.0C565.0 435.3 550.3 440.0 540.0 440.0C529.7 440.0 510.7 436.7 498.0 432.0C485.3 427.3 473.0 419.8 464.0 412.0C455.0 404.2 447.2 393.3 444.0 385.0C440.8 376.7 440.7 360.3 445.0 362.0Z" fill="#262626" />
<path d="M800.0 372.0C795.7 374.8 789.2 393.2 780.0 402.0C770.8 410.8 758.3 419.3 745.0 425.0C731.7 430.7 704.2 433.2 700.0 436.0C695.8 438.8 710.3 442.7 720.0 442.0C729.7 441.3 746.3 437.3 758.0 432.0C769.7 426.7 782.0 417.8 790.0 410.0C798.0 402.2 804.3 391.3 806.0 385.0C807.7 378.7 804.3 369.2 800.0 372.0Z" fill="#262626" />
<path d="M578.0 197.0C582.2 188.8 592.3 191.7 610.0 191.0C627.7 190.3 664.3 190.3 684.0 193.0C703.7 195.7 717.0 200.2 728.0 207.0C739.0 213.8 742.8 225.7 750.0 234.0C757.2 242.3 768.7 250.2 771.0 257.0C773.3 263.8 768.8 271.0 764.0 275.0C759.2 279.0 748.0 277.2 742.0 281.0C736.0 284.8 733.7 290.5 728.0 298.0C722.3 305.5 714.3 322.0 708.0 326.0C701.7 330.0 695.0 326.3 690.0 322.0C685.0 317.7 683.0 305.0 678.0 300.0C673.0 295.0 665.0 292.0 660.0 292.0C655.0 292.0 651.3 295.7 648.0 300.0C644.7 304.3 648.0 314.3 640.0 318.0C632.0 321.7 609.2 325.0 600.0 322.0C590.8 319.0 588.3 309.0 585.0 300.0C581.7 291.0 580.0 278.0 580.0 268.0C580.0 258.0 585.3 251.8 585.0 240.0C584.7 228.2 573.8 205.2 578.0 197.0Z" fill="#1d1d1d" />
<ellipse cx="504" cy="360" rx="38.5" ry="31" fill="#262626" transform="rotate(-25 504 360)"/>
<ellipse cx="551" cy="347" rx="11.5" ry="16" fill="#262626" transform="rotate(10 551 347)"/>
<path d="M462.0 322.0C465.3 320.7 478.3 326.2 480.0 330.0C481.7 333.8 475.3 343.7 472.0 345.0C468.7 346.3 461.7 341.8 460.0 338.0C458.3 334.2 458.7 323.3 462.0 322.0Z" fill="#1e1e1e" />
<path d="M498.0 222.0C505.0 221.0 513.3 225.3 520.0 232.0C526.7 238.7 536.0 252.3 538.0 262.0C540.0 271.7 535.3 282.8 532.0 290.0C528.7 297.2 523.7 300.0 518.0 305.0C512.3 310.0 504.7 315.2 498.0 320.0C491.3 324.8 483.0 334.3 478.0 334.0C473.0 333.7 470.5 325.0 468.0 318.0C465.5 311.0 463.2 301.3 463.0 292.0C462.8 282.7 464.5 271.0 467.0 262.0C469.5 253.0 472.8 244.7 478.0 238.0C483.2 231.3 491.0 223.0 498.0 222.0Z" fill="#8d8d8d" />
<path d="M510.0 218.0C510.0 214.0 517.7 209.0 524.0 206.0C530.3 203.0 540.5 199.5 548.0 200.0C555.5 200.5 564.0 204.5 569.0 209.0C574.0 213.5 576.8 220.5 578.0 227.0C579.2 233.5 578.0 242.0 576.0 248.0C574.0 254.0 569.7 263.0 566.0 263.0C562.3 263.0 558.5 252.5 554.0 248.0C549.5 243.5 544.0 239.0 539.0 236.0C534.0 233.0 528.8 233.0 524.0 230.0C519.2 227.0 510.0 222.0 510.0 218.0Z" fill="#3c3c3c" />
<path d="M545.0 274.0C549.0 271.0 561.0 269.0 566.0 271.0C571.0 273.0 573.5 280.5 575.0 286.0C576.5 291.5 576.5 298.5 575.0 304.0C573.5 309.5 571.5 315.5 566.0 319.0C560.5 322.5 550.0 325.5 542.0 325.0C534.0 324.5 522.3 319.0 518.0 316.0C513.7 313.0 514.0 309.5 516.0 307.0C518.0 304.5 525.7 304.0 530.0 301.0C534.3 298.0 539.5 293.5 542.0 289.0C544.5 284.5 541.0 277.0 545.0 274.0Z" fill="#3c3c3c" />
<ellipse cx="540.8" cy="235.3" rx="5.2" ry="4.4" fill="#080808"/><ellipse cx="544.5" cy="237.0" rx="2.6" ry="2.3" fill="#080808"/><ellipse cx="516.4" cy="219.1" rx="2.3" ry="2.2" fill="#080808"/><ellipse cx="554.5" cy="238.8" rx="2.6" ry="1.8" fill="#080808"/><ellipse cx="545.9" cy="203.8" rx="2.7" ry="2.1" fill="#080808"/><ellipse cx="545.3" cy="240.3" rx="3.7" ry="3.4" fill="#080808"/><ellipse cx="541.1" cy="217.5" rx="5.5" ry="5.5" fill="#080808"/><ellipse cx="567.1" cy="244.6" rx="3.1" ry="2.4" fill="#080808"/><ellipse cx="562.1" cy="225.2" rx="5.0" ry="4.0" fill="#080808"/><ellipse cx="571.9" cy="229.6" rx="5.4" ry="4.4" fill="#080808"/><ellipse cx="562.9" cy="217.0" rx="2.3" ry="1.8" fill="#080808"/><ellipse cx="575.6" cy="247.8" rx="2.4" ry="1.9" fill="#080808"/><ellipse cx="564.2" cy="211.2" rx="4.0" ry="3.3" fill="#080808"/><ellipse cx="524.5" cy="217.0" rx="5.4" ry="5.1" fill="#080808"/><ellipse cx="524.3" cy="224.8" rx="5.0" ry="4.5" fill="#080808"/><ellipse cx="524.5" cy="216.3" rx="4.7" ry="3.8" fill="#080808"/><ellipse cx="530.2" cy="204.6" rx="2.3" ry="2.0" fill="#080808"/><ellipse cx="535.3" cy="228.6" rx="5.4" ry="4.5" fill="#080808"/><ellipse cx="522.4" cy="209.7" rx="5.2" ry="4.9" fill="#080808"/><ellipse cx="527.0" cy="212.0" rx="4.6" ry="4.5" fill="#080808"/><ellipse cx="570.0" cy="238.0" rx="3.5" ry="2.5" fill="#080808"/><ellipse cx="550.6" cy="218.5" rx="2.6" ry="2.4" fill="#080808"/><ellipse cx="514.7" cy="214.4" rx="4.0" ry="3.8" fill="#080808"/><ellipse cx="551.8" cy="217.7" rx="5.2" ry="4.0" fill="#080808"/><ellipse cx="540.3" cy="203.8" rx="2.6" ry="2.1" fill="#080808"/><ellipse cx="548.9" cy="208.3" rx="3.3" ry="3.2" fill="#080808"/><ellipse cx="557.0" cy="236.8" rx="2.5" ry="1.8" fill="#080808"/><ellipse cx="560.1" cy="244.3" rx="4.8" ry="4.7" fill="#080808"/><ellipse cx="571.3" cy="254.9" rx="3.5" ry="3.2" fill="#080808"/><ellipse cx="568.7" cy="236.1" rx="4.2" ry="3.4" fill="#080808"/><ellipse cx="549.6" cy="238.4" rx="2.3" ry="2.0" fill="#080808"/><ellipse cx="559.5" cy="224.5" rx="4.6" ry="4.0" fill="#080808"/><ellipse cx="542.7" cy="214.5" rx="4.4" ry="3.8" fill="#080808"/><ellipse cx="523.8" cy="210.7" rx="5.2" ry="4.6" fill="#080808"/>
<ellipse cx="544.0" cy="306.5" rx="4.3" ry="3.2" fill="#080808"/><ellipse cx="532.2" cy="314.8" rx="4.4" ry="3.9" fill="#080808"/><ellipse cx="548.9" cy="306.7" rx="2.5" ry="2.1" fill="#080808"/><ellipse cx="519.5" cy="315.2" rx="2.3" ry="2.0" fill="#080808"/><ellipse cx="565.7" cy="272.0" rx="2.2" ry="2.2" fill="#080808"/><ellipse cx="546.0" cy="275.9" rx="5.5" ry="5.4" fill="#080808"/><ellipse cx="552.7" cy="279.8" rx="4.4" ry="3.2" fill="#080808"/><ellipse cx="526.1" cy="315.0" rx="3.4" ry="2.8" fill="#080808"/><ellipse cx="551.2" cy="296.7" rx="3.3" ry="2.4" fill="#080808"/><ellipse cx="556.7" cy="307.4" rx="2.4" ry="1.8" fill="#080808"/><ellipse cx="537.4" cy="298.6" rx="4.8" ry="4.1" fill="#080808"/><ellipse cx="541.4" cy="299.0" rx="2.8" ry="2.3" fill="#080808"/><ellipse cx="538.9" cy="312.7" rx="2.4" ry="2.0" fill="#080808"/><ellipse cx="526.5" cy="308.6" rx="2.1" ry="1.7" fill="#080808"/><ellipse cx="536.3" cy="305.4" rx="2.2" ry="1.8" fill="#080808"/><ellipse cx="544.1" cy="322.8" rx="3.7" ry="3.6" fill="#080808"/><ellipse cx="560.2" cy="320.3" rx="2.0" ry="1.6" fill="#080808"/><ellipse cx="561.5" cy="289.5" rx="2.8" ry="2.0" fill="#080808"/><ellipse cx="535.0" cy="313.5" rx="4.9" ry="4.4" fill="#080808"/><ellipse cx="544.2" cy="304.9" rx="2.9" ry="2.9" fill="#080808"/><ellipse cx="568.8" cy="279.8" rx="3.0" ry="2.9" fill="#080808"/><ellipse cx="546.4" cy="308.6" rx="4.5" ry="3.4" fill="#080808"/><ellipse cx="556.3" cy="308.5" rx="2.5" ry="2.4" fill="#080808"/><ellipse cx="541.7" cy="323.9" rx="4.0" ry="3.5" fill="#080808"/><ellipse cx="560.9" cy="293.6" rx="4.1" ry="3.9" fill="#080808"/><ellipse cx="562.6" cy="302.3" rx="3.2" ry="2.6" fill="#080808"/><ellipse cx="559.4" cy="301.4" rx="2.1" ry="1.9" fill="#080808"/><ellipse cx="547.6" cy="313.6" rx="3.3" ry="2.4" fill="#080808"/><ellipse cx="571.1" cy="308.2" rx="3.9" ry="3.5" fill="#080808"/><ellipse cx="557.3" cy="292.3" rx="2.9" ry="2.4" fill="#080808"/><ellipse cx="535.1" cy="308.0" rx="2.5" ry="1.8" fill="#080808"/><ellipse cx="534.4" cy="308.6" rx="4.7" ry="4.2" fill="#080808"/><ellipse cx="571.1" cy="290.7" rx="2.1" ry="1.8" fill="#080808"/><ellipse cx="555.4" cy="289.4" rx="2.8" ry="2.3" fill="#080808"/>
<ellipse cx="645" cy="220" rx="16" ry="5" fill="#7a7a7a" transform="rotate(-5 645 220)"/>
<ellipse cx="702" cy="218" rx="12" ry="8" fill="#8a8a8a" transform="rotate(-15 702 218)"/>
<ellipse cx="665" cy="205" rx="30" ry="4" fill="#555" transform="rotate(3 665 205)"/>
<path d="M688.0 199.0C692.3 197.7 717.3 200.5 722.0 203.0C726.7 205.5 720.3 212.7 716.0 214.0C711.7 215.3 700.7 213.5 696.0 211.0C691.3 208.5 683.7 200.3 688.0 199.0Z" fill="#050505" />
<ellipse cx="650" cy="262" rx="7" ry="5" fill="#b0b0b0"/>
<ellipse cx="662" cy="266" rx="5" ry="4" fill="#b0b0b0"/>
<ellipse cx="690" cy="270" rx="22" ry="3" fill="#777" transform="rotate(-12 690 270)"/>
<ellipse cx="725" cy="258" rx="2.5" ry="2.5" fill="#9a9a9a"/>
<ellipse cx="740" cy="262" rx="2.5" ry="2.5" fill="#9a9a9a"/>
<ellipse cx="700" cy="300" rx="2.5" ry="2.5" fill="#9a9a9a"/>
<ellipse cx="690" cy="296" rx="2.5" ry="2.5" fill="#9a9a9a"/>
<ellipse cx="734" cy="246" rx="2.5" ry="2.5" fill="#9a9a9a"/>
<ellipse cx="650" cy="240" rx="2.5" ry="2.5" fill="#9a9a9a"/>
<ellipse cx="745" cy="275" rx="2.5" ry="2.5" fill="#9a9a9a"/>
<path d="M588.0 285.0C591.3 282.5 601.3 292.8 610.0 295.0C618.7 297.2 630.3 298.8 640.0 298.0C649.7 297.2 659.7 289.7 668.0 290.0C676.3 290.3 684.7 295.3 690.0 300.0C695.3 304.7 700.0 313.0 700.0 318.0C700.0 323.0 696.7 330.0 690.0 330.0C683.3 330.0 668.3 318.8 660.0 318.0C651.7 317.2 648.3 324.3 640.0 325.0C631.7 325.7 618.3 324.5 610.0 322.0C601.7 319.5 593.7 316.2 590.0 310.0C586.3 303.8 584.7 287.5 588.0 285.0Z" fill="#7c7c7c" />
<path d="M700.0 300.0C707.0 293.3 720.0 287.0 730.0 282.0C740.0 277.0 750.8 267.0 760.0 270.0C769.2 273.0 778.7 289.2 785.0 300.0C791.3 310.8 796.8 323.0 798.0 335.0C799.2 347.0 796.7 361.2 792.0 372.0C787.3 382.8 779.5 392.3 770.0 400.0C760.5 407.7 746.7 416.3 735.0 418.0C723.3 419.7 707.5 416.3 700.0 410.0C692.5 403.7 693.3 390.0 690.0 380.0C686.7 370.0 680.3 359.7 680.0 350.0C679.7 340.3 684.7 330.3 688.0 322.0C691.3 313.7 693.0 306.7 700.0 300.0Z" fill="#6c6c6c" />
<path d="M708.0 372.0C708.8 370.0 718.8 374.2 725.0 376.0C731.2 377.8 738.3 382.7 745.0 383.0C751.7 383.3 760.0 376.8 765.0 378.0C770.0 379.2 776.7 386.7 775.0 390.0C773.3 393.3 761.7 397.2 755.0 398.0C748.3 398.8 740.8 396.7 735.0 395.0C729.2 393.3 724.5 391.8 720.0 388.0C715.5 384.2 707.2 374.0 708.0 372.0Z" fill="#3a3a3a" />
<ellipse cx="782" cy="326" rx="3.5" ry="4.5" fill="#050505"/>
<path d="M750.0 215.0C752.8 212.7 760.8 213.8 765.0 218.0C769.2 222.2 774.2 232.7 775.0 240.0C775.8 247.3 773.2 260.3 770.0 262.0C766.8 263.7 759.7 255.0 756.0 250.0C752.3 245.0 749.0 237.8 748.0 232.0C747.0 226.2 747.2 217.3 750.0 215.0Z" fill="#808080" />
<path d="M560.0 372.0C567.5 369.8 583.3 378.7 590.0 385.0C596.7 391.3 595.0 403.3 600.0 410.0C605.0 416.7 613.3 425.0 620.0 425.0C626.7 425.0 635.0 416.7 640.0 410.0C645.0 403.3 643.3 391.3 650.0 385.0C656.7 378.7 671.7 369.5 680.0 372.0C688.3 374.5 698.3 390.7 700.0 400.0C701.7 409.3 698.3 421.3 690.0 428.0C681.7 434.7 661.7 438.7 650.0 440.0C638.3 441.3 630.0 436.0 620.0 436.0C610.0 436.0 601.7 441.3 590.0 440.0C578.3 438.7 557.5 435.0 550.0 428.0C542.5 421.0 543.3 407.3 545.0 398.0C546.7 388.7 552.5 374.2 560.0 372.0Z" fill="#686868" />
<ellipse cx="504" cy="360" rx="36.5" ry="29" fill="#c6c6c6" transform="rotate(-25 504 360)"/>
<ellipse cx="498" cy="352" rx="22" ry="12" fill="#d2d2d2" transform="rotate(-25 498 352)"/>
<path d="M494.0 366.0C495.0 364.3 500.0 361.8 503.0 360.0C506.0 358.2 510.0 356.8 512.0 355.0C514.0 353.2 513.8 349.7 515.0 349.0C516.2 348.3 518.5 349.7 519.0 351.0C519.5 352.3 516.5 355.7 518.0 357.0C519.5 358.3 526.5 358.0 528.0 359.0C529.5 360.0 529.0 362.3 527.0 363.0C525.0 363.7 519.3 362.2 516.0 363.0C512.7 363.8 510.2 366.8 507.0 368.0C503.8 369.2 499.2 370.3 497.0 370.0C494.8 369.7 493.0 367.7 494.0 366.0Z" fill="#444" />
<ellipse cx="500" cy="365.5" rx="5" ry="2.3" fill="#fff" transform="rotate(-15 500 365.5)"/>
<ellipse cx="550" cy="347" rx="9" ry="13" fill="#fdfdfd" transform="rotate(8 550 347)"/>
<ellipse cx="596" cy="313" rx="14" ry="13" fill="#b9b9b9"/>
<ellipse cx="625" cy="312" rx="12" ry="12" fill="#c6c6c6"/>
<ellipse cx="622" cy="392" rx="15" ry="11" fill="#5e5e5e"/>
<path d="M592.0 352.0C592.0 346.7 593.0 340.0 596.0 336.0C599.0 332.0 605.3 329.7 610.0 328.0C614.7 326.3 619.0 326.0 624.0 326.0C629.0 326.0 635.3 326.0 640.0 328.0C644.7 330.0 649.3 334.0 652.0 338.0C654.7 342.0 656.0 347.0 656.0 352.0C656.0 357.0 654.7 364.0 652.0 368.0C649.3 372.0 644.7 375.2 640.0 376.0C635.3 376.8 629.3 372.8 624.0 373.0C618.7 373.2 612.7 377.8 608.0 377.0C603.3 376.2 598.7 372.2 596.0 368.0C593.3 363.8 592.0 357.3 592.0 352.0Z" fill="#fbfbfb" />
<ellipse cx="625" cy="358" rx="18" ry="6.5" fill="#8e8e8e" transform="rotate(8 625 358)"/>
<path d="M600.0 383.0C603.0 381.7 607.2 384.8 610.0 388.0C612.8 391.2 615.8 397.8 617.0 402.0C618.2 406.2 619.2 411.5 617.0 413.0C614.8 414.5 608.5 411.8 604.0 411.0C599.5 410.2 592.0 410.5 590.0 408.0C588.0 405.5 590.3 400.2 592.0 396.0C593.7 391.8 597.0 384.3 600.0 383.0Z" fill="#fff" />
<path d="M638.0 386.0C640.7 386.0 645.7 390.3 648.0 394.0C650.3 397.7 653.3 405.0 652.0 408.0C650.7 411.0 644.3 411.0 640.0 412.0C635.7 413.0 628.5 415.3 626.0 414.0C623.5 412.7 624.0 407.3 625.0 404.0C626.0 400.7 629.8 397.0 632.0 394.0C634.2 391.0 635.3 386.0 638.0 386.0Z" fill="#fff" />
<path d="M618.5 423.0C620.3 422.8 624.9 435.8 624.0 438.5C623.1 441.2 613.9 442.1 613.0 439.5C612.1 436.9 616.7 423.2 618.5 423.0Z" fill="#fff" />
</g>
<path d="M478 469 Q627 498 776 471" fill="none" stroke="url(#arcg)" stroke-width="2.6"/>
<line x1="759.4" y1="283.5" x2="704" y2="372.6" stroke="#2a2a10" stroke-width="4"/>
<line x1="759.4" y1="283.5" x2="704" y2="372.6" stroke="#e6e060" stroke-width="2"/>
<path d="M759.4 280l3.5 3.5-3.5 3.5-3.5-3.5zM704 369.100l3.500 3.500-3.500 3.500-3.500-3.500z" fill="#f4f0a0" stroke="#333" stroke-width="0.8"/>
<g font-family="Liberation Sans, sans-serif" font-size="12" fill="#e89070" stroke="#1a1a1a" stroke-width="2.200" paint-order="stroke" stroke-linejoin="round"><text x="774" y="285" textLength="44" lengthAdjust="spacingAndGlyphs">その他 1</text><text x="774" y="301" textLength="56" lengthAdjust="spacingAndGlyphs">80.31 mm</text></g>
<g fill="#d8d8d8" font-size="16" font-family="Liberation Sans, sans-serif" text-anchor="middle"><text x="252.0" y="499.0">A</text><text x="238.0" y="519.0">R</text><text x="268.0" y="519.0">L</text><text x="252.0" y="537.5">P</text></g>
<rect x="245.0" y="506.0" width="15" height="15" fill="none" stroke="#d8d8d8" stroke-dasharray="1 1.500"/><path d="M251.0 506.0h3M252.5 504.5v3M251.0 521.0h3M252.5 519.5v3M243.5 513.5h3M245.0 512.0v3M258.5 513.5h3M260.0 512.0v3M251.0 513.5h3M252.5 512.0v3" stroke="#f0f0f0" stroke-width="1"/>
<g transform="translate(908,522.5)"><rect x="0.5" y="0.5" width="17" height="17" rx="1.5" fill="#8c8c8c" stroke="#b0b0b0"/><rect x="4" y="2" width="10" height="6" fill="#b8b8b8"/><rect x="4" y="11" width="10" height="7" fill="#b8b8b8"/><rect x="10" y="12" width="3" height="5" fill="#222"/></g>
<g transform="translate(932,522.5)"><circle cx="9" cy="9" r="6.3" fill="none" stroke="#c4c4c4" stroke-width="3"/></g>
<g transform="translate(956,522.5)" fill="#8c8c8c"><path d="M0 0h7l-2.500 2.500 3 3-2 2-3-3L0 7zM18 0v7l-2.500-2.500-3 3-2-2 3-3L11 0zM0 18v-7l2.500 2.500 3-3 2 2-3 3L7 18zM18 18h-7l2.500-2.500-3-3 2-2 3 3L18 11z"/></g>
<g transform="translate(980,522.5)"><rect x="0.5" y="3.5" width="17" height="12" rx="2" fill="#8c8c8c" stroke="#b0b0b0"/><rect x="3" y="1.500" width="5" height="3" fill="#8c8c8c"/><circle cx="7.5" cy="9.500" r="3.6" fill="#b8b8b8" stroke="#777"/><rect x="12.500" y="5.500" width="3.500" height="2.500" fill="#c8c8c8"/></g>
<g transform="translate(1004,522.5)"><rect x="0" y="0" width="3.500" height="17" fill="#b0b0b0"/><path d="M5 1h12M5 5h12M5 9h8M5 13h7M5 17h6" stroke="#b0b0b0" stroke-width="2.400"/><path d="M11 6l7.500 7-3.200.3 2 4-1.800.8-2-4.100-2.500 2z" fill="#9a9a9a" stroke="#444" stroke-width=".6"/></g>
</svg>
</div>
<div class="vp" id="vp2" style="top:548px;height:521px">
<div class="tab on" style="left:0px;width:122px;border-top-left-radius:4px"><i>タイムポイント 2</i></div><div class="tab on" style="left:124px;width:377px">ONCO FOLLOW UP Series Selection Dashboard</div><div class="tab on" style="left:503px;width:106px"><span style="letter-spacing:.8px">2006/12/13</span></div>
<div class="ov" style="left:9px;top:34px">[ Axial 308 / 545 &gt;&gt;]<br>[ <span class="oj">平均</span> &gt;&gt; ]<br>[ <span class="oj">厚さ</span> 1.3 mm] <span class="bx">+</span> <span class="bx">&minus;</span></div>
<svg width="809" height="521" viewBox="223 552 809 521" style="left:0;top:0">
<path d="M497.5 591v10M510.6 591v5.5M523.6 591v5.5M536.7 591v5.5M549.8 591v5.5M562.9 591v10M576.0 591v5.5M589.0 591v5.5M602.1 591v5.5M615.2 591v5.5M628.2 591v10M641.3 591v5.5M654.4 591v5.5M667.5 591v5.5M680.5 591v5.5M693.6 591v10M706.7 591v5.5M719.8 591v5.5M732.9 591v5.5M745.9 591v5.5M759.0 591v10" stroke="#d8d8d8" stroke-width="1" fill="none" shape-rendering="crispEdges"/>
<path d="M1008.0 683.5h15M1017.5 696.5h5.5M1017.5 709.5h5.5M1017.5 722.5h5.5M1017.5 735.5h5.5M1008.0 748.5h15M1017.5 761.5h5.5M1017.5 774.5h5.5M1017.5 787.5h5.5M1017.5 800.5h5.5M1008.0 813.5h15M1017.5 826.5h5.5M1017.5 839.5h5.5M1017.5 852.5h5.5M1017.5 865.5h5.5M1008.0 878.5h15M1017.5 891.5h5.5M1017.5 904.5h5.5M1017.5 917.5h5.5M1017.5 930.5h5.5M1008.0 943.5h15" stroke="#d8d8d8" stroke-width="1" fill="none" shape-rendering="crispEdges"/>
<g filter="url(#ctf)">
<path d="M625.0 673.0C641.8 674.0 656.0 678.3 674.0 682.0C692.0 685.7 716.7 690.2 733.0 695.0C749.3 699.8 760.0 704.3 772.0 711.0C784.0 717.7 796.7 726.0 805.0 735.0C813.3 744.0 817.3 754.7 822.0 765.0C826.7 775.3 831.5 785.7 833.0 797.0C834.5 808.3 833.2 821.2 831.0 833.0C828.8 844.8 825.3 856.7 820.0 868.0C814.7 879.3 808.5 890.7 799.0 901.0C789.5 911.3 776.3 922.2 763.0 930.0C749.7 937.8 736.2 944.2 719.0 948.0C701.8 951.8 675.7 952.7 660.0 953.0C644.3 953.3 639.5 951.0 625.0 950.0C610.5 949.0 590.2 948.5 573.0 947.0C555.8 945.5 539.3 944.7 522.0 941.0C504.7 937.3 483.7 932.2 469.0 925.0C454.3 917.8 442.7 909.3 434.0 898.0C425.3 886.7 421.0 870.8 417.0 857.0C413.0 843.2 410.2 827.8 410.0 815.0C409.8 802.2 411.7 792.8 416.0 780.0C420.3 767.2 427.7 750.0 436.0 738.0C444.3 726.0 456.5 715.0 466.0 708.0C475.5 701.0 482.7 699.8 493.0 696.0C503.3 692.2 514.7 688.3 528.0 685.0C541.3 681.7 556.8 678.0 573.0 676.0C589.2 674.0 608.2 672.0 625.0 673.0Z" fill="#171717" stroke="#707070" stroke-width="1.3" />
<path d="M625.0 687.0C641.7 688.2 662.5 691.5 680.0 695.0C697.5 698.5 715.3 702.5 730.0 708.0C744.7 713.5 757.2 720.2 768.0 728.0C778.8 735.8 787.7 744.7 795.0 755.0C802.3 765.3 808.7 778.3 812.0 790.0C815.3 801.7 816.0 813.0 815.0 825.0C814.0 837.0 810.8 850.3 806.0 862.0C801.2 873.7 795.0 885.3 786.0 895.0C777.0 904.7 764.3 913.5 752.0 920.0C739.7 926.5 727.3 931.0 712.0 934.0C696.7 937.0 674.5 937.8 660.0 938.0C645.5 938.2 638.3 935.3 625.0 935.0C611.7 934.7 595.8 937.2 580.0 936.0C564.2 934.8 545.0 932.0 530.0 928.0C515.0 924.0 501.7 918.7 490.0 912.0C478.3 905.3 468.0 897.5 460.0 888.0C452.0 878.5 447.3 867.2 442.0 855.0C436.7 842.8 429.7 827.5 428.0 815.0C426.3 802.5 428.7 791.2 432.0 780.0C435.3 768.8 441.0 757.7 448.0 748.0C455.0 738.3 464.5 729.0 474.0 722.0C483.5 715.0 494.0 710.3 505.0 706.0C516.0 701.7 527.5 699.0 540.0 696.0C552.5 693.0 565.8 689.5 580.0 688.0C594.2 686.5 608.3 685.8 625.0 687.0Z" fill="#666" />
<path d="M476.0 728.0C473.0 733.0 462.3 746.8 458.0 758.0C453.7 769.2 450.7 783.3 450.0 795.0C449.3 806.7 451.3 819.5 454.0 828.0C456.7 836.5 464.0 843.0 466.0 846.0" fill="none" stroke="#1c1c1c" stroke-width="3"/>
<path d="M770.0 735.0C774.3 740.0 790.5 754.2 796.0 765.0C801.5 775.8 802.7 787.5 803.0 800.0C803.3 812.5 801.0 828.0 798.0 840.0C795.0 852.0 787.2 866.7 785.0 872.0" fill="none" stroke="#3a3a3a" stroke-width="2.5"/>
<path d="M440.0 858.0C444.0 860.2 452.0 883.3 462.0 893.0C472.0 902.7 485.3 909.8 500.0 916.0C514.7 922.2 545.0 926.3 550.0 930.0C555.0 933.7 540.0 938.3 530.0 938.0C520.0 937.7 502.0 933.3 490.0 928.0C478.0 922.7 466.7 914.0 458.0 906.0C449.3 898.0 441.0 888.0 438.0 880.0C435.0 872.0 436.0 855.8 440.0 858.0Z" fill="#262626" />
<path d="M805.0 868.0C800.5 871.3 794.2 890.7 785.0 900.0C775.8 909.3 763.2 917.7 750.0 924.0C736.8 930.3 709.7 935.0 706.0 938.0C702.3 941.0 718.3 943.3 728.0 942.0C737.7 940.7 752.7 936.0 764.0 930.0C775.3 924.0 788.0 914.3 796.0 906.0C804.0 897.7 810.5 886.3 812.0 880.0C813.5 873.7 809.5 864.7 805.0 868.0Z" fill="#262626" />
<path d="M600.0 700.0C601.2 696.5 602.7 698.3 615.0 699.0C627.3 699.7 655.2 701.5 674.0 704.0C692.8 706.5 715.7 707.3 728.0 714.0C740.3 720.7 743.7 734.0 748.0 744.0C752.3 754.0 754.5 765.2 754.0 774.0C753.5 782.8 751.8 790.2 745.0 797.0C738.2 803.8 721.3 807.0 713.0 815.0C704.7 823.0 701.5 843.8 695.0 845.0C688.5 846.2 679.8 824.5 674.0 822.0C668.2 819.5 665.7 830.0 660.0 830.0C654.3 830.0 646.7 827.0 640.0 822.0C633.3 817.0 626.7 805.3 620.0 800.0C613.3 794.7 605.8 795.0 600.0 790.0C594.2 785.0 585.0 777.5 585.0 770.0C585.0 762.5 596.2 753.3 600.0 745.0C603.8 736.7 608.0 727.5 608.0 720.0C608.0 712.5 598.8 703.5 600.0 700.0Z" fill="#1d1d1d" />
<ellipse cx="493" cy="856" rx="37" ry="31.5" fill="#262626" transform="rotate(-15 493 856)"/>
<ellipse cx="543" cy="843" rx="11" ry="15" fill="#262626" transform="rotate(5 543 843)"/>
<path d="M452.0 822.0C455.3 820.3 468.3 824.2 470.0 828.0C471.7 831.8 465.3 843.3 462.0 845.0C458.7 846.7 451.7 841.8 450.0 838.0C448.3 834.2 448.7 823.7 452.0 822.0Z" fill="#1e1e1e" />
<path d="M466.0 741.0C472.5 738.0 485.2 741.0 493.0 744.0C500.8 747.0 509.3 753.0 513.0 759.0C516.7 765.0 516.3 773.2 515.0 780.0C513.7 786.8 510.2 793.2 505.0 800.0C499.8 806.8 491.5 815.0 484.0 821.0C476.5 827.0 465.7 836.0 460.0 836.0C454.3 836.0 452.2 828.0 450.0 821.0C447.8 814.0 446.3 803.8 447.0 794.0C447.7 784.2 450.8 770.8 454.0 762.0C457.2 753.2 459.5 744.0 466.0 741.0Z" fill="#8d8d8d" />
<path d="M478.0 730.0C478.3 722.7 490.2 713.5 500.0 708.0C509.8 702.5 523.3 698.8 537.0 697.0C550.7 695.2 569.8 694.0 582.0 697.0C594.2 700.0 605.3 707.5 610.0 715.0C614.7 722.5 613.3 733.7 610.0 742.0C606.7 750.3 595.8 757.0 590.0 765.0C584.2 773.0 580.8 787.5 575.0 790.0C569.2 792.5 564.2 784.2 555.0 780.0C545.8 775.8 529.5 769.7 520.0 765.0C510.5 760.3 505.0 757.8 498.0 752.0C491.0 746.2 477.7 737.3 478.0 730.0Z" fill="#6e6e6e" />
<path d="M484.0 731.0C485.5 726.3 496.2 717.8 505.0 713.0C513.8 708.2 524.7 703.8 537.0 702.0C549.3 700.2 568.2 699.2 579.0 702.0C589.8 704.8 598.2 713.0 602.0 719.0C605.8 725.0 604.8 731.8 602.0 738.0C599.2 744.2 593.3 752.3 585.0 756.0C576.7 759.7 562.0 760.0 552.0 760.0C542.0 760.0 532.0 757.2 525.0 756.0C518.0 754.8 514.8 755.5 510.0 753.0C505.2 750.5 500.3 744.7 496.0 741.0C491.7 737.3 482.5 735.7 484.0 731.0Z" fill="#020202" />
<path d="M495.0 808.0C496.7 802.5 503.7 793.8 512.0 790.0C520.3 786.2 535.0 784.7 545.0 785.0C555.0 785.3 566.8 787.5 572.0 792.0C577.2 796.5 577.5 806.2 576.0 812.0C574.5 817.8 570.7 824.3 563.0 827.0C555.3 829.7 540.2 828.7 530.0 828.0C519.8 827.3 507.8 826.3 502.0 823.0C496.2 819.7 493.3 813.5 495.0 808.0Z" fill="#343434" />
<ellipse cx="508.4" cy="814.7" rx="4.2" ry="3.6" fill="#080808"/><ellipse cx="512.5" cy="819.1" rx="4.8" ry="4.1" fill="#080808"/><ellipse cx="535.9" cy="795.2" rx="2.0" ry="1.6" fill="#080808"/><ellipse cx="542.4" cy="788.0" rx="4.8" ry="3.7" fill="#080808"/><ellipse cx="565.9" cy="811.5" rx="2.1" ry="1.7" fill="#080808"/><ellipse cx="535.3" cy="790.0" rx="5.3" ry="4.3" fill="#080808"/><ellipse cx="507.5" cy="820.2" rx="2.4" ry="2.4" fill="#080808"/><ellipse cx="531.7" cy="808.7" rx="3.2" ry="2.7" fill="#080808"/><ellipse cx="565.1" cy="795.1" rx="4.7" ry="3.6" fill="#080808"/><ellipse cx="556.1" cy="817.8" rx="4.0" ry="3.7" fill="#080808"/><ellipse cx="504.9" cy="805.5" rx="4.9" ry="3.7" fill="#080808"/><ellipse cx="528.2" cy="800.7" rx="3.6" ry="2.9" fill="#080808"/><ellipse cx="535.2" cy="806.1" rx="3.9" ry="3.6" fill="#080808"/><ellipse cx="513.0" cy="811.2" rx="3.9" ry="3.5" fill="#080808"/><ellipse cx="523.2" cy="824.9" rx="3.2" ry="2.8" fill="#080808"/><ellipse cx="519.8" cy="789.4" rx="2.2" ry="2.1" fill="#080808"/><ellipse cx="557.9" cy="801.1" rx="4.4" ry="4.0" fill="#080808"/><ellipse cx="528.0" cy="827.5" rx="5.4" ry="4.7" fill="#080808"/><ellipse cx="566.5" cy="806.1" rx="3.3" ry="2.6" fill="#080808"/><ellipse cx="566.0" cy="792.0" rx="2.2" ry="2.1" fill="#080808"/><ellipse cx="557.7" cy="805.8" rx="4.9" ry="3.5" fill="#080808"/><ellipse cx="515.9" cy="797.5" rx="3.5" ry="2.6" fill="#080808"/><ellipse cx="555.4" cy="805.6" rx="2.9" ry="2.8" fill="#080808"/><ellipse cx="537.6" cy="816.3" rx="2.1" ry="1.6" fill="#080808"/><ellipse cx="562.9" cy="819.2" rx="5.1" ry="4.5" fill="#080808"/><ellipse cx="529.5" cy="810.0" rx="5.0" ry="3.9" fill="#080808"/><ellipse cx="538.3" cy="796.9" rx="4.7" ry="3.3" fill="#080808"/><ellipse cx="550.5" cy="826.0" rx="2.1" ry="1.8" fill="#080808"/><ellipse cx="547.2" cy="821.6" rx="4.0" ry="3.1" fill="#080808"/><ellipse cx="527.9" cy="826.2" rx="5.2" ry="3.8" fill="#080808"/><ellipse cx="506.4" cy="822.3" rx="4.3" ry="3.2" fill="#080808"/><ellipse cx="538.6" cy="798.9" rx="3.7" ry="2.9" fill="#080808"/><ellipse cx="525.6" cy="815.5" rx="3.9" ry="2.8" fill="#080808"/><ellipse cx="552.6" cy="822.6" rx="4.7" ry="4.4" fill="#080808"/><ellipse cx="500.1" cy="817.8" rx="2.6" ry="2.4" fill="#080808"/><ellipse cx="515.5" cy="815.0" rx="3.1" ry="2.2" fill="#080808"/><ellipse cx="526.5" cy="798.3" rx="5.2" ry="4.1" fill="#080808"/><ellipse cx="535.8" cy="808.6" rx="5.3" ry="3.9" fill="#080808"/><ellipse cx="543.7" cy="806.9" rx="4.6" ry="4.5" fill="#080808"/><ellipse cx="520.1" cy="815.1" rx="3.8" ry="3.3" fill="#080808"/>
<ellipse cx="660" cy="714" rx="14" ry="11" fill="#8e8e8e" transform="rotate(-20 660 714)"/>
<ellipse cx="670" cy="741" rx="11" ry="10" fill="#8a8a8a"/>
<path d="M692.0 742.0C692.3 737.5 695.7 731.0 700.0 728.0C704.3 725.0 713.0 723.3 718.0 724.0C723.0 724.7 729.3 728.7 730.0 732.0C730.7 735.3 725.7 741.3 722.0 744.0C718.3 746.7 712.0 746.2 708.0 748.0C704.0 749.8 700.7 756.0 698.0 755.0C695.3 754.0 691.7 746.5 692.0 742.0Z" fill="#8e8e8e" />
<ellipse cx="716" cy="772" rx="18" ry="10" fill="#8e8e8e" transform="rotate(30 716 772)"/>
<ellipse cx="638" cy="775" rx="6" ry="7" fill="#c0c0c0"/>
<ellipse cx="657" cy="781" rx="4.5" ry="4.5" fill="#c0c0c0"/>
<path d="M585.0 790.0C589.2 787.3 601.7 794.3 610.0 796.0C618.3 797.7 627.5 796.8 635.0 800.0C642.5 803.2 648.8 809.7 655.0 815.0C661.2 820.3 670.5 827.5 672.0 832.0C673.5 836.5 668.5 842.3 664.0 842.0C659.5 841.7 651.5 833.3 645.0 830.0C638.5 826.7 632.5 823.3 625.0 822.0C617.5 820.7 606.7 823.7 600.0 822.0C593.3 820.3 587.5 817.3 585.0 812.0C582.5 806.7 580.8 792.7 585.0 790.0Z" fill="#7c7c7c" />
<path d="M738.0 716.0C741.0 714.7 750.7 717.2 756.0 722.0C761.3 726.8 767.3 736.7 770.0 745.0C772.7 753.3 773.7 768.2 772.0 772.0C770.3 775.8 763.7 772.5 760.0 768.0C756.3 763.5 753.7 751.3 750.0 745.0C746.3 738.7 740.0 734.8 738.0 730.0C736.0 725.2 735.0 717.3 738.0 716.0Z" fill="#808080" />
<path d="M700.0 830.0C705.8 822.7 716.7 812.7 725.0 806.0C733.3 799.3 741.7 791.0 750.0 790.0C758.3 789.0 767.5 793.3 775.0 800.0C782.5 806.7 792.2 818.7 795.0 830.0C797.8 841.3 795.8 856.7 792.0 868.0C788.2 879.3 781.0 890.2 772.0 898.0C763.0 905.8 749.2 913.8 738.0 915.0C726.8 916.2 712.7 910.8 705.0 905.0C697.3 899.2 694.5 889.2 692.0 880.0C689.5 870.8 688.7 858.3 690.0 850.0C691.3 841.7 694.2 837.3 700.0 830.0Z" fill="#6c6c6c" />
<path d="M702.0 868.0C703.0 865.7 714.8 872.0 722.0 874.0C729.2 876.0 737.3 881.3 745.0 880.0C752.7 878.7 762.2 867.3 768.0 866.0C773.8 864.7 781.0 868.0 780.0 872.0C779.0 876.0 769.0 886.0 762.0 890.0C755.0 894.0 745.7 896.3 738.0 896.0C730.3 895.7 722.0 892.7 716.0 888.0C710.0 883.3 701.0 870.3 702.0 868.0Z" fill="#3a3a3a" />
<path d="M556.0 875.0C563.0 872.7 578.3 879.8 585.0 886.0C591.7 892.2 590.5 905.3 596.0 912.0C601.5 918.7 610.7 926.0 618.0 926.0C625.3 926.0 634.7 918.7 640.0 912.0C645.3 905.3 643.3 892.2 650.0 886.0C656.7 879.8 671.7 872.7 680.0 875.0C688.3 877.3 698.3 891.2 700.0 900.0C701.7 908.8 698.3 921.7 690.0 928.0C681.7 934.3 661.7 936.8 650.0 938.0C638.3 939.2 630.0 935.0 620.0 935.0C610.0 935.0 602.0 939.2 590.0 938.0C578.0 936.8 555.8 934.3 548.0 928.0C540.2 921.7 541.7 908.8 543.0 900.0C544.3 891.2 549.0 877.3 556.0 875.0Z" fill="#686868" />
<ellipse cx="493" cy="856" rx="35" ry="29.5" fill="#cecece" transform="rotate(-15 493 856)"/>
<ellipse cx="488" cy="850" rx="20" ry="12" fill="#dadada" transform="rotate(-15 488 850)"/>
<path d="M488.0 861.0C488.3 859.3 493.0 857.8 495.0 856.0C497.0 854.2 498.3 851.5 500.0 850.0C501.7 848.5 503.7 846.8 505.0 847.0C506.3 847.2 508.0 849.5 508.0 851.0C508.0 852.5 504.5 854.7 505.0 856.0C505.5 857.3 510.5 857.8 511.0 859.0C511.5 860.2 509.8 862.5 508.0 863.0C506.2 863.5 502.5 861.5 500.0 862.0C497.5 862.5 495.0 866.2 493.0 866.0C491.0 865.8 487.7 862.7 488.0 861.0Z" fill="#505050" />
<ellipse cx="543" cy="842" rx="8.5" ry="12" fill="#fdfdfd"/>
<ellipse cx="587.8" cy="814.4" rx="14" ry="13.5" fill="#b4b4b4"/>
<ellipse cx="617.4" cy="810.7" rx="12" ry="12" fill="#c6c6c6"/>
<path d="M586.0 872.0C596.7 869.3 633.8 869.0 644.0 872.0C654.2 875.0 646.8 883.7 647.0 890.0C647.2 896.3 647.5 906.2 645.0 910.0C642.5 913.8 636.3 913.3 632.0 913.0C627.7 912.7 621.5 910.3 619.0 908.0C616.5 905.7 618.7 900.5 617.0 899.0C615.3 897.5 610.7 897.8 609.0 899.0C607.3 900.2 609.8 904.3 607.0 906.0C604.2 907.7 596.8 909.3 592.0 909.0C587.2 908.7 580.0 907.5 578.0 904.0C576.0 900.5 578.7 893.3 580.0 888.0C581.3 882.7 575.3 874.7 586.0 872.0Z" fill="#fff" />
<path d="M584.0 852.0C584.5 847.0 585.0 840.0 588.0 836.0C591.0 832.0 597.3 829.7 602.0 828.0C606.7 826.3 611.0 826.0 616.0 826.0C621.0 826.0 627.3 826.0 632.0 828.0C636.7 830.0 641.2 834.0 644.0 838.0C646.8 842.0 648.2 847.3 648.5 852.0C648.8 856.7 647.4 862.2 646.0 866.0C644.6 869.8 649.3 873.5 640.0 875.0C630.7 876.5 599.2 876.5 590.0 875.0C580.8 873.5 586.0 869.8 585.0 866.0C584.0 862.2 583.5 857.0 584.0 852.0Z" fill="#d2d2d2" stroke="#fff" stroke-width="3" />
<ellipse cx="613" cy="882.5" rx="16" ry="10.5" fill="#585858"/>
<path d="M608.0 892.0C609.5 889.2 616.5 888.8 618.0 892.0C619.5 895.2 618.5 908.2 617.0 911.0C615.5 913.8 610.5 912.2 609.0 909.0C607.5 905.8 606.5 894.8 608.0 892.0Z" fill="#5a5a5a" />
<path d="M546 886 L582 884.500" stroke="#fff" stroke-width="4" stroke-linecap="round"/>
<ellipse cx="609.6" cy="930.7" rx="1.8" ry="1.8" fill="#fff"/>
</g>
<path d="M454 970 Q627 1005.500 802 970.500" fill="none" stroke="url(#arcg)" stroke-width="2.6"/>
<path d="M584 1042.500 H670" stroke="#8a8a8a" stroke-width="1.2"/>
<line x1="742.4" y1="801.4" x2="699.6" y2="865.5" stroke="#2a2a10" stroke-width="4"/>
<line x1="742.4" y1="801.4" x2="699.6" y2="865.5" stroke="#e6e060" stroke-width="2"/>
<path d="M742.4 797.900l3.500 3.500-3.500 3.500-3.500-3.500zM699.600 862l3.500 3.500-3.500 3.500-3.500-3.500z" fill="#f4f0a0" stroke="#333" stroke-width="0.8"/>
<g font-family="Liberation Sans, sans-serif" font-size="12" fill="#ecec8c" stroke="#1a1a1a" stroke-width="2.200" paint-order="stroke" stroke-linejoin="round"><text x="757" y="803" textLength="44" lengthAdjust="spacingAndGlyphs">その他 1</text><text x="757" y="819" textLength="56" lengthAdjust="spacingAndGlyphs">58.87 mm</text></g>
<g fill="#d8d8d8" font-size="16" font-family="Liberation Sans, sans-serif" text-anchor="middle"><text x="252.0" y="1022.0">A</text><text x="238.0" y="1042.0">R</text><text x="268.0" y="1042.0">L</text><text x="252.0" y="1060.5">P</text></g>
<rect x="245.0" y="1029.0" width="15" height="15" fill="none" stroke="#d8d8d8" stroke-dasharray="1 1.500"/><path d="M251.0 1029.0h3M252.5 1027.5v3M251.0 1044.0h3M252.5 1042.5v3M243.5 1036.5h3M245.0 1035.0v3M258.5 1036.5h3M260.0 1035.0v3M251.0 1036.5h3M252.5 1035.0v3" stroke="#f0f0f0" stroke-width="1"/>
<g transform="translate(908,1045.5)"><rect x="0.5" y="0.5" width="17" height="17" rx="1.5" fill="#8c8c8c" stroke="#b0b0b0"/><rect x="4" y="2" width="10" height="6" fill="#b8b8b8"/><rect x="4" y="11" width="10" height="7" fill="#b8b8b8"/><rect x="10" y="12" width="3" height="5" fill="#222"/></g>
<g transform="translate(932,1045.5)"><circle cx="9" cy="9" r="6.3" fill="none" stroke="#c4c4c4" stroke-width="3"/></g>
<g transform="translate(956,1045.5)" fill="#8c8c8c"><path d="M0 0h7l-2.500 2.500 3 3-2 2-3-3L0 7zM18 0v7l-2.500-2.500-3 3-2-2 3-3L11 0zM0 18v-7l2.500 2.500 3-3 2 2-3 3L7 18zM18 18h-7l2.500-2.500-3-3 2-2 3 3L18 11z"/></g>
<g transform="translate(980,1045.5)"><rect x="0.5" y="3.5" width="17" height="12" rx="2" fill="#8c8c8c" stroke="#b0b0b0"/><rect x="3" y="1.500" width="5" height="3" fill="#8c8c8c"/><circle cx="7.5" cy="9.500" r="3.6" fill="#b8b8b8" stroke="#777"/><rect x="12.500" y="5.500" width="3.500" height="2.500" fill="#c8c8c8"/></g>
<g transform="translate(1004,1045.5)"><rect x="0" y="0" width="3.500" height="17" fill="#b0b0b0"/><path d="M5 1h12M5 5h12M5 9h8M5 13h7M5 17h6" stroke="#b0b0b0" stroke-width="2.400"/><path d="M11 6l7.500 7-3.200.3 2 4-1.800.8-2-4.100-2.500 2z" fill="#9a9a9a" stroke="#444" stroke-width=".6"/></g>
</svg>
</div>
</div>
<!-- ============ RIGHT ============ -->
<div id="right">
<svg width="800" height="30" viewBox="1034 4 800 30" style="left:0;top:0">
<rect x="1583.500" y="8.500" width="226" height="18" rx="3" fill="#22262d" stroke="#0a0a0a"/>
<g transform="translate(1583.3,8)"><path d="M14.800 7.500A4.800 4.800 0 1 0 15.600 11.500" fill="none" stroke="#86b4f8" stroke-width="1.800"/><path d="M12.300 8h5.200v-5.200z" fill="#86b4f8"/><path d="M1.500 3.500h4.500M3.700 1.200v4.500" stroke="#86b4f8" stroke-width="1.100"/><circle cx="13.800" cy="15.300" r="1.400" fill="#86b4f8"/></g><g transform="translate(1608,9)" fill="#86b4f8"><rect x="0" y="0" width="9" height="7.200"/><rect x="0" y="8.600" width="9" height="7.200"/><rect x="10.500" y="0" width="4.200" height="4.200"/><rect x="10.500" y="5.800" width="4.200" height="4.200"/><rect x="10.500" y="11.600" width="4.200" height="4.200"/></g><rect x="1632.0" y="10.500" width="13" height="13" fill="none" stroke="#86b4f8" stroke-width="1.300"/><g transform="translate(1656.8,9)"><path d="M1.500 5v6.500a3.500 3.500 0 0 0 7 0V4a2.300 2.300 0 0 0-4.600 0v7a1.100 1.100 0 0 0 2.200 0V5" fill="none" stroke="#86b4f8" stroke-width="1.300"/></g><text x="1684.4" y="23" font-family="Liberation Sans, sans-serif" font-size="19" fill="#86b4f8" text-anchor="middle">α</text><g><circle cx="1707.8" cy="17" r="5.600" fill="#2c3036" stroke="#8a8a8a" stroke-width="1.300"/><path d="M1702.2 17a5.600 5.600 0 0 1 11.200 0z" fill="#8a8a8a"/></g><path d="M1724 17h5M1733 17h5M1731 10v5M1731 19v5" stroke="#86b4f8" stroke-width="1.800"/><g transform="translate(1746,11)" fill="none" stroke="#8a8a8a" stroke-width="1.200"><rect x=".5" y=".5" width="15" height="11"/><path d="M.5 4h15M8 .5v11"/><path d="M3 8h10M3 8l2-1.500M3 8l2 1.500M13 8l-2-1.500M13 8l-2 1.500" stroke-width="1"/></g><g fill="#86b4f8"><circle cx="1773.8" cy="14" r="5"/><circle cx="1780.6" cy="20.300" r="4.500"/><path d="M1773 18.500l5 4.500 4.500-5-5-5z"/></g><g><rect x="1794.5" y="11.500" width="11" height="11" fill="none" stroke="#8a8a8a" stroke-width="1.200"/><text x="1800" y="21" font-family="Liberation Sans, sans-serif" font-size="10" fill="#8a8a8a" text-anchor="middle">D</text></g><g transform="translate(1823.300,17.300) rotate(45) scale(.78)"><path d="M-2.200 -8h4.400v5.800h5.800v4.400h-5.800v5.800h-4.400v-5.800h-5.800v-4.400h5.800z" fill="none" stroke="#6c6c6c" stroke-width="1.300" stroke-linejoin="round"/></g>
</svg>
<div class="rp" style="top:25px;height:311px"></div>
<svg width="800" height="320" viewBox="1034 29 800 320" style="left:0;top:25px" font-family="Liberation Sans, sans-serif">
<rect x="1094" y="52" width="715" height="235.500" fill="#d3d3d3"/><path d="M1094 74.5H1809" stroke="#c6c6c6" stroke-width="1"/><path d="M1091 74.5h3" stroke="#fff" stroke-width="1"/><text x="1088" y="77.6" text-anchor="end" fill="#f0f0f0" font-size="12" textLength="16" lengthAdjust="spacingAndGlyphs">140</text><path d="M1094 103.8H1809" stroke="#c6c6c6" stroke-width="1"/><path d="M1091 103.8h3" stroke="#fff" stroke-width="1"/><text x="1088" y="106.9" text-anchor="end" fill="#f0f0f0" font-size="12" textLength="16" lengthAdjust="spacingAndGlyphs">130</text><path d="M1094 133.1H1809" stroke="#c6c6c6" stroke-width="1"/><path d="M1091 133.1h3" stroke="#fff" stroke-width="1"/><text x="1088" y="136.2" text-anchor="end" fill="#f0f0f0" font-size="12" textLength="16" lengthAdjust="spacingAndGlyphs">120</text><path d="M1094 162.4H1809" stroke="#c6c6c6" stroke-width="1"/><path d="M1091 162.4h3" stroke="#fff" stroke-width="1"/><text x="1088" y="165.5" text-anchor="end" fill="#f0f0f0" font-size="12" textLength="16" lengthAdjust="spacingAndGlyphs">110</text><path d="M1094 191.7H1809" stroke="#c6c6c6" stroke-width="1"/><path d="M1091 191.7h3" stroke="#fff" stroke-width="1"/><text x="1088" y="194.8" text-anchor="end" fill="#f0f0f0" font-size="12" textLength="16" lengthAdjust="spacingAndGlyphs">100</text><path d="M1094 221.0H1809" stroke="#c6c6c6" stroke-width="1"/><path d="M1091 221.0h3" stroke="#fff" stroke-width="1"/><text x="1088" y="224.1" text-anchor="end" fill="#f0f0f0" font-size="12" textLength="11" lengthAdjust="spacingAndGlyphs">90</text><path d="M1094 250.3H1809" stroke="#c6c6c6" stroke-width="1"/><path d="M1091 250.3h3" stroke="#fff" stroke-width="1"/><text x="1088" y="253.4" text-anchor="end" fill="#f0f0f0" font-size="12" textLength="11" lengthAdjust="spacingAndGlyphs">80</text><path d="M1094 279.5H1809" stroke="#c6c6c6" stroke-width="1"/><path d="M1091 279.5h3" stroke="#fff" stroke-width="1"/><text x="1088" y="282.6" text-anchor="end" fill="#f0f0f0" font-size="12" textLength="11" lengthAdjust="spacingAndGlyphs">70</text><path d="M1093.500 49V287.500H1812.500" fill="none" stroke="#fff" stroke-width="1"/><circle cx="1093.500" cy="49" r="1.500" fill="#fff"/><circle cx="1812.500" cy="287.500" r="1.500" fill="#fff"/><path d="M1101.500 285v4.500M1744.500 285v4.500" stroke="#fff"/><path d="M1101 224.500H1744" stroke="#8a8a8a" stroke-width="1" stroke-dasharray="2 1.500"/><text x="1117" y="220" fill="#555" font-size="11" textLength="86" lengthAdjust="spacingAndGlyphs">ベースライン－ 30%</text><path d="M1101 113.500L1744.500 172.500" stroke="#f4a868" stroke-width="2.200" stroke-linecap="round"/><text x="1740" y="61.500" fill="#555" font-size="11" text-anchor="middle">SD</text><text x="1740" y="74" fill="#555" font-size="11" text-anchor="middle" textLength="94" lengthAdjust="spacingAndGlyphs">ベースライン－15.87%</text><text x="1101" y="303" fill="#f0f0f0" font-size="12" text-anchor="middle" textLength="55" lengthAdjust="spacingAndGlyphs">ベースライン</text><text x="1101" y="317" fill="#f0f0f0" font-size="12" text-anchor="middle" textLength="60" lengthAdjust="spacingAndGlyphs">2006/11/02</text><text x="1744" y="303" fill="#f0f0f0" font-size="12" text-anchor="middle" textLength="74" lengthAdjust="spacingAndGlyphs">タイムポイント 2</text><text x="1744" y="317" fill="#f0f0f0" font-size="12" text-anchor="middle" textLength="60" lengthAdjust="spacingAndGlyphs">2006/12/13</text><text transform="translate(1056,178) rotate(-90)" fill="#f0f0f0" font-size="12" text-anchor="middle" textLength="96" lengthAdjust="spacingAndGlyphs">腫瘍径総和(mm)</text>
</svg>
<div class="rp" style="top:338px;height:469px;background:#7a7a7a"></div>
<div class="abs" style="left:7px;top:345px;width:749px;height:19px;background:#787878;border:1px solid #666;border-top-color:#9c9c9c;border-left-color:#9c9c9c"></div>
<div class="abs" style="left:156px;top:346px;width:2px;height:17px;background:#6a6a6a;border-right:1px solid #909090"></div>
<div class="abs" style="left:281px;top:346px;width:2px;height:17px;background:#6a6a6a;border-right:1px solid #909090"></div>
<div class="abs" style="left:406px;top:346px;width:2px;height:17px;background:#6a6a6a;border-right:1px solid #909090"></div>
<div class="t th" style="left:69px;top:348.0px;">病変</div>
<div class="t th" style="left:188px;top:348.0px;"><span style="letter-spacing:-2.200px">ベースライン</span></div>
<div class="t th" style="left:304px;top:348.0px;"><span style="letter-spacing:-2.100px">タイムポイント</span>&nbsp; 2</div>
<div class="abs" style="left:7px;top:430px;width:749px;height:33px;background:#0c2469"></div>
<div class="abs" style="left:8px;top:563px;width:747px;height:31px;background:#4d4d4d;color:#fff;text-align:center;line-height:30px;font-size:13px">非標的</div>
<div class="abs" style="left:8px;top:728px;width:747px;height:31px;background:#4d4d4d;color:#fff;text-align:center;line-height:30px;font-size:13px">総合効果</div>
<div class="t td" style="left:49px;top:373.5px;color:#000;"><b>2-肝臓 2 (mm)</b></div>
<div class="t td" style="left:161px;top:373.5px;color:#000;">10.82</div>
<div class="t td" style="left:285px;top:373.5px;color:#000;">14.62 (+35.12%)</div>
<div class="t td" style="left:49px;top:406.5px;color:#000;"><b>3-その他 1 (mm)</b></div>
<div class="t td" style="left:161px;top:406.5px;color:#000;">80.31</div>
<div class="t td" style="left:285px;top:406.5px;color:#000;">58.87 (-26.70%)</div>
<div class="t td" style="left:49px;top:439.5px;color:#030a26;"><b>4-その他 2 (mm)</b></div>
<div class="t td" style="left:161px;top:439.5px;color:#030a26;">25.53</div>
<div class="t td" style="left:285px;top:439.5px;color:#030a26;">24.17 (-5.33%)</div>
<div class="t td" style="left:17px;top:505.5px;color:#000;"><span class="k">腫瘍径総和 (直径, mm)</span></div>
<div class="t td" style="left:161px;top:505.5px;color:#000;">126.80</div>
<div class="t td" style="left:285px;top:505.5px;color:#000;">106.68 (-15.87%)</div>
<div class="t td" style="left:17px;top:538.5px;color:#000;"><span class="k">標的病変の評価</span></div>
<div class="t td" style="left:285px;top:538.5px;color:#000;">SD</div>
<div class="t td" style="left:49px;top:604.5px;color:#000;"><span class="k">肺 1 (mm)</span></div>
<div class="t td" style="left:161px;top:604.5px;color:#000;">5.86</div>
<div class="t td" style="left:285px;top:604.5px;color:#000;">11.63 (+98.46%)</div>
<div class="t td" style="left:17px;top:670.5px;color:#000;"><span class="k">腫瘍径総和 (直径, mm)</span></div>
<div class="t td" style="left:161px;top:670.5px;color:#000;">5.86</div>
<div class="t td" style="left:285px;top:670.5px;color:#000;">11.63 (+98.46%)</div>
<div class="t td" style="left:17px;top:703.5px;color:#000;"><span class="k">非標的病変の評価</span></div>
<div class="t td" style="left:285px;top:703.5px;color:#000;">Non-CR/Non-PD</div>
<div class="t td" style="left:17px;top:769.5px;color:#000;"><span class="k">総合効果</span></div>
<div class="t td" style="left:285px;top:769.5px;color:#000;"><span style="color:#f39a2c">SD</span></div>
<svg width="40" height="300" viewBox="1041 368 40 300" style="left:7px;top:364px">
<g transform="translate(1049,375) scale(1.0)"><path d="M1.200 6.500C1.500 2.500 5 1.200 10 1c6-.2 12-.4 16.800.4 1.200.4.800 1.800.2 2.800-2.500 4-7.500 7.500-13 9.500-2.800 1-4.500 2.500-6 5-.8 1.300-2.200 1.700-3.300.6C2.200 17 1 11 1.200 6.500z" fill="#7e3330" stroke="#bc645c" stroke-width="1" stroke-linejoin="round"/><circle cx="8.500" cy="9.500" r="1.700" fill="#b85c5a"/><circle cx="6.800" cy="6" r=".9" fill="#b85c5a"/><circle cx="17" cy="6.800" r=".9" fill="#b85c5a"/></g>
<g transform="translate(1050,403) scale(1.0)"><path d="M3 4C4 1.500 7 .4 9.500 1.200c1.800.6 2.800 2.200 4 3.600 1.200 1.300 3 1.600 5.200 1.500 2.300-.1 4.500.2 4.800 2.500.4 3.800.4 8-.5 12-.6 2.200-2.500 3.300-5 3.800-3.500.7-6 1.800-8.500 3.800-1.800 1.400-4.200 1.800-5.800.3C1.500 26.800 1 23 1.200 19c.2-5 .6-10.500 1.800-15z" fill="#7e3330" stroke="#c46a62" stroke-width="1" stroke-linejoin="round"/><text x="10.500" y="21" font-family="Liberation Sans, sans-serif" font-weight="bold" font-size="15" fill="#7e3330" stroke="#cc7c74" stroke-width=".8" text-anchor="middle">?</text></g>
<g transform="translate(1050,436) scale(1.0)"><path d="M3 4C4 1.500 7 .4 9.500 1.200c1.800.6 2.800 2.200 4 3.600 1.200 1.300 3 1.600 5.200 1.500 2.300-.1 4.500.2 4.800 2.500.4 3.800.4 8-.5 12-.6 2.200-2.500 3.300-5 3.800-3.500.7-6 1.800-8.500 3.800-1.800 1.400-4.200 1.800-5.800.3C1.500 26.800 1 23 1.200 19c.2-5 .6-10.500 1.800-15z" fill="#7e3330" stroke="#c46a62" stroke-width="1" stroke-linejoin="round"/><text x="10.500" y="21" font-family="Liberation Sans, sans-serif" font-weight="bold" font-size="15" fill="#7e3330" stroke="#cc7c74" stroke-width=".8" text-anchor="middle">?</text></g>
<g transform="translate(1048.5,600.5) scale(1.0)" fill="#6e4e2a" stroke="#b88c54" stroke-width="1" stroke-linejoin="round"><path d="M12.800 3.500C11.800 1 8.500.2 6.500 2 3.500 5 1.500 12 .8 20c-.3 3.500-.3 6 .4 7.500.5 1 1.600.9 2.500.2 2-1.500 4.500-3 7.300-3.800 1.200-.4 1.700-1 1.700-2.500.1-5 .6-12 .1-17.900z"/><path d="M15.800 3.500C16.800 1 20.100.2 22.100 2c3 3 5 10 5.700 18 .3 3.500.3 6-.4 7.500-.5 1-1.600.9-2.500.2-1.800-1.500-3.200-3.500-4.500-5-.8-1-1.800-1.500-2.300-2.700-1.200-3.500-2.600-10.500-2.300-16.500z"/><circle cx="6" cy="16.500" r="1.500" fill="#b08850" stroke="none"/><circle cx="9" cy="13" r=".9" fill="#b08850" stroke="none"/><circle cx="22" cy="9.500" r="1" fill="#b08850" stroke="none"/></g>
</svg>
<div class="abs" style="left:770px;top:345px;width:20px;height:454px;background:#e9e7e3;background-image:repeating-conic-gradient(#fff 0 25%,#d4d0c8 0 50%);background-size:2px 2px"></div>
<div class="abs sbb" style="left:770px;top:345px;height:19px"></div>
<div class="abs sbb" style="left:770px;top:481px;height:298px"></div>
<div class="abs sbb" style="left:770px;top:779px;height:20px"></div>
<svg width="20" height="460" viewBox="1804 349 20 460" style="left:770px;top:345px"><path d="M1810 361.500h8l-4-4.500zM1810 791h8l-4 4.500z" fill="#000"/></svg>
<div class="rp" style="top:808px;height:261px"></div>
<div class="t fl" style="left:19px;top:826.5px;color:#fff">標的病変の評価</div>
<div class="t fl" style="left:19px;top:855.5px;color:#fff">非標的病変の評価:</div>
<div class="t fl" style="left:19px;top:884.5px;color:#0a0a0a"><span style="letter-spacing:-3.200px">コメント</span> :</div>
<div class="t fl" style="left:19px;top:913.5px;color:#fff">総合評価(RECIST 1.1):</div>
<div class="t fl" style="left:173px;top:943px;color:#0c0c0c">SD + Non-CR/Non-PD + 新病変なし = SD</div>
<div class="t fl" style="left:19px;top:971.5px;color:#0a0a0a">承認者:</div>
<div class="t fl" style="left:19px;top:1000.5px;color:#0a0a0a"><span style="letter-spacing:-3.200px">コメント</span> :</div>
<div class="abs fb" style="left:170px;top:823px;width:250px;height:21px;border-radius:0px;"><span>SD</span></div>
<div class="abs fb" style="left:170px;top:852px;width:250px;height:21px;border-radius:4px;"><span>Non-CR/Non-PD</span><svg width="12" height="8" viewBox="0 0 12 8" style="right:5px;top:7px"><path d="M1 1.500l5 5 5-5" fill="none" stroke="#1a1a1a" stroke-width="2.200"/></svg></div>
<div class="abs fb" style="left:170px;top:881px;width:492px;height:21px;border-radius:0px;"></div>
<div class="abs fb" style="left:170px;top:910px;width:250px;height:21px;border-radius:4px;"><span>SD</span><svg width="12" height="8" viewBox="0 0 12 8" style="right:5px;top:7px"><path d="M1 1.500l5 5 5-5" fill="none" stroke="#1a1a1a" stroke-width="2.200"/></svg></div>
<div class="abs fb" style="left:170px;top:968px;width:492px;height:21px;border-radius:0px;"></div>
<div class="abs fb" style="left:170px;top:997px;width:492px;height:21px;border-radius:0px;"></div>
<div class="abs fb" style="left:678px;top:823px;width:104px;height:88px;border-radius:3px;text-align:center;color:#fff;line-height:88px;padding:0;border:1px solid #858585;border-bottom-color:#666;border-right-color:#6a6a6a"><span class="bl" style="letter-spacing:-1.200px">承認せずに閉じる</span></div>
<div class="abs fb" style="left:678px;top:929px;width:104px;height:88px;border-radius:3px;text-align:center;color:#fff;line-height:88px;padding:0;border:1px solid #858585;border-bottom-color:#666;border-right-color:#6a6a6a"><span class="bl">承認する</span></div>
</div>
</body>
</html>
